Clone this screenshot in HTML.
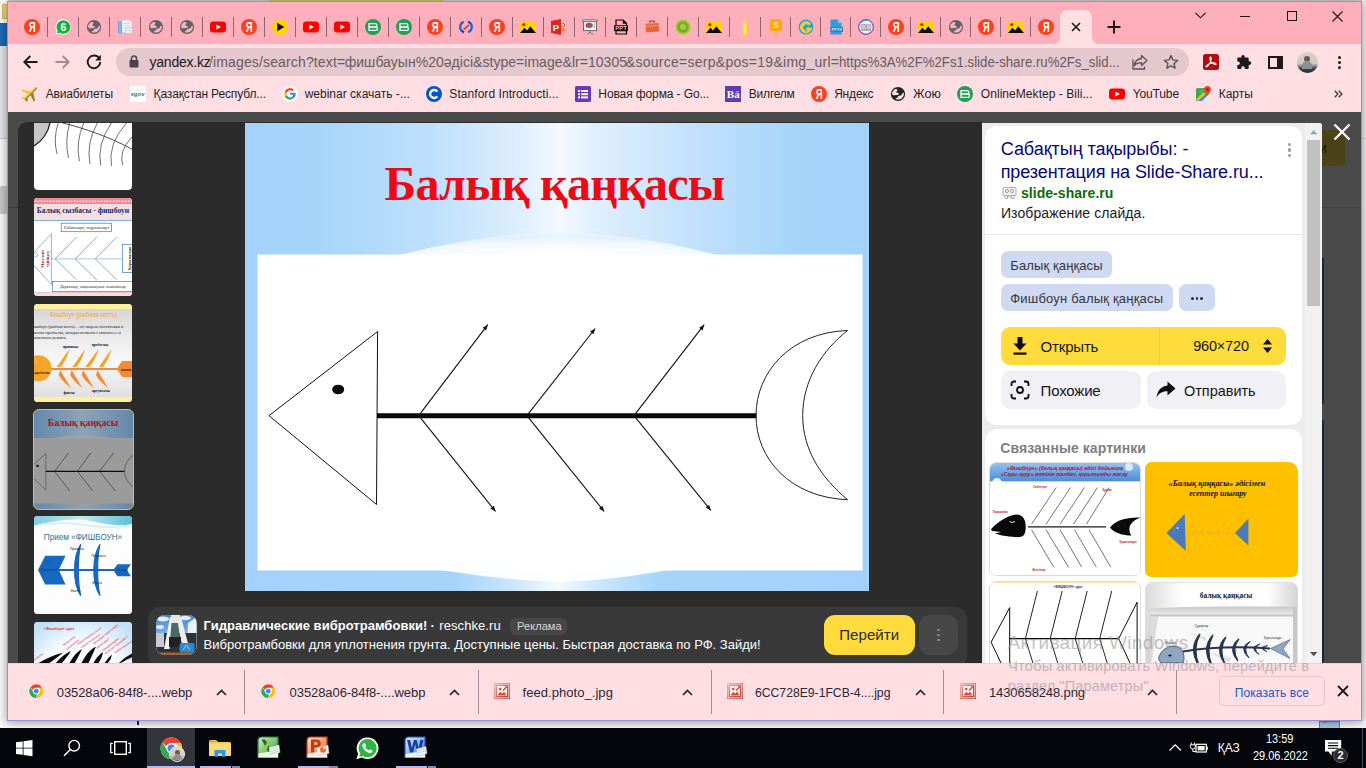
<!DOCTYPE html>
<html lang="ru"><head><meta charset="utf-8"><title>Яндекс Картинки</title><style>
html,body{margin:0;padding:0}
body{width:1366px;height:768px;overflow:hidden;position:relative;background:#f0f0f0;font-family:'Liberation Sans',sans-serif}
div,span,svg{position:absolute;box-sizing:border-box}
.t{white-space:pre;display:block}
svg{overflow:visible}
svg text{white-space:pre}
</style></head>
<body>
<!-- s_frame -->
<div style="left:0px;top:0px;width:1366px;height:728px;background:#f1f1f1;"></div>
<div style="left:0px;top:0px;width:8px;height:23px;background:#ffffff;"></div>
<div style="left:2px;top:3.5px;width:6px;height:15px;background:#ecd98e;border:1px solid #d9bc4a;border-right:none;"></div>
<div style="left:0px;top:23px;width:8px;height:23px;background:#1c6cb8;"></div>
<div style="left:0px;top:46px;width:8px;height:92px;background:#e6e8ec;"></div>
<div style="left:0px;top:138px;width:8px;height:1px;background:#c8c8c8;"></div>
<div style="left:0px;top:139px;width:8px;height:47px;background:#fafafa;"></div>
<div style="left:0px;top:185.5px;width:8px;height:28.5px;background:#c9c9c9;"></div>
<div style="left:0px;top:214px;width:8px;height:514px;background:#fbfbfb;"></div>
<div style="left:1361px;top:0px;width:5px;height:728px;background:#f4f4f4;"></div>
<div style="left:1362px;top:138px;width:4px;height:1px;background:#d0d0d0;"></div>
<div style="left:0px;top:721px;width:1366px;height:7px;background:#fafafa;"></div>
<div style="left:137px;top:721px;width:1.5px;height:4px;background:#2a1a4a;"></div>
<div style="left:1318.5px;top:721px;width:21.5px;height:7px;background:#a8cce4;border:1px solid #4a94cc;border-bottom:none;"></div>
<div style="left:1323px;top:721px;width:4px;height:2px;background:#f0f0f0;border:.5px solid #8a8a8a;"></div>
<div style="left:8px;top:0px;width:1354px;height:1px;background:#dadada;"></div>
<div style="left:269px;top:0px;width:174px;height:1px;background:#cdcd6c;"></div>
<div style="left:7px;top:1px;width:1355px;height:720px;background:#ffdee4;border:1px solid #9492dc;box-shadow:0 1px 9px 1px rgba(0,0,0,.36);"></div>
<div style="left:8px;top:2px;width:1353px;height:42px;background:#ffafbc;"></div>
<div style="left:8px;top:44px;width:1353px;height:68px;background:#ffdee4;"></div>
<div style="left:8px;top:112px;width:1353px;height:551px;background:#4a4a4a;"></div>
<div style="left:8px;top:207px;width:12px;height:1px;background:#3c3c3c;"></div>
<!-- s_tabs -->
<svg style="left:24.0px;top:19.0px;" width="16" height="16" viewBox="0 0 16 16"><circle cx="8" cy="8" r="8" fill="#fc3f1d"/><text transform="translate(8.100 13.100) scale(.66 1)" font-family="'Liberation Sans',sans-serif" font-weight="700" font-size="14.500" fill="#fff" text-anchor="middle">Я</text></svg>
<div style="left:47px;top:17px;width:1px;height:20px;background:#8a6670;"></div>
<svg style="left:55.0px;top:19.0px;" width="16" height="16" viewBox="0 0 16 16"><path d="M8.3 0.3a7.6 7.6 0 1 1-3.9 14.2L0.4 15.7l1.2-3.9A7.6 7.6 0 0 1 8.3 0.3z" fill="#fff"/><path d="M8.3 1.2a6.8 6.8 0 1 1-3.6 12.5L1.7 14.5l.9-2.9A6.8 6.8 0 0 1 8.3 1.2z" fill="#12b53c"/><text x="8.4" y="11.8" font-family="'Liberation Sans',sans-serif" font-weight="700" font-size="10.5" fill="#fff" text-anchor="middle">6</text></svg>
<div style="left:78px;top:17px;width:1px;height:20px;background:#8a6670;"></div>
<svg style="left:86.0px;top:19.0px;" width="16" height="16" viewBox="0 0 16 16"><circle cx="8" cy="8" r="7.100" fill="#5f6368"/><path d="M2.100 7.600C2.300 5.600 3.600 3.900 5.400 3.100 6.300 2.900 7.300 3.300 7.500 4 7.700 4.800 6.300 5.300 6.500 6.200 6.700 7 8.300 6.700 8.800 7.500 9.200 8.300 8 9.200 6.800 9 5.400 8.800 4.600 9.400 3.300 9.200 2.500 9.100 2 8.500 2.100 7.600z" fill="#ffafbc"/><path d="M13.900 7.400C14 9.400 13.100 11.300 11.500 12.400 10 13.400 7.600 13.900 6 13.200 5.400 12.900 5.700 12.200 6.500 12 7.600 11.700 7.600 10.700 8.500 10 9.400 9.300 10.300 9.900 11.300 9.200 12.200 8.600 11.900 7.600 12.700 7 13.200 6.600 13.800 6.800 13.900 7.400z" fill="#ffafbc"/></svg>
<div style="left:109px;top:17px;width:1px;height:20px;background:#8a6670;"></div>
<svg style="left:117.0px;top:19.0px;" width="16" height="16" viewBox="0 0 16 16"><rect x="1.200" y="2" width="4.200" height="12.300" fill="#5a9ee2"/><rect x="2.200" y="2" width="1.600" height="12.300" fill="#8cc0f0"/><path d="M5 1h7.500l2.300 2.300V13.500H5z" fill="#f3f5f8" stroke="#d2d6dc" stroke-width=".5"/><rect x="6.500" y="4" width="6.500" height=".9" fill="#d4d8de"/><rect x="6.500" y="6" width="6.500" height=".9" fill="#d4d8de"/><rect x="6.500" y="8" width="3" height=".9" fill="#d4d8de"/><rect x="8.500" y="8.800" width="7" height="6" fill="#eceff3" stroke="#b4bac2" stroke-width=".6"/><rect x="9.800" y="11" width="4.400" height="1" fill="#c8cdd4"/></svg>
<div style="left:140px;top:17px;width:1px;height:20px;background:#8a6670;"></div>
<svg style="left:148.0px;top:19.0px;" width="16" height="16" viewBox="0 0 16 16"><circle cx="8" cy="8" r="7.100" fill="#5f6368"/><path d="M2.100 7.600C2.300 5.600 3.600 3.900 5.400 3.100 6.300 2.900 7.300 3.300 7.500 4 7.700 4.800 6.300 5.300 6.500 6.200 6.700 7 8.300 6.700 8.800 7.500 9.200 8.300 8 9.200 6.800 9 5.400 8.800 4.600 9.400 3.300 9.200 2.500 9.100 2 8.500 2.100 7.600z" fill="#ffafbc"/><path d="M13.900 7.400C14 9.400 13.100 11.300 11.500 12.400 10 13.400 7.600 13.900 6 13.200 5.400 12.900 5.700 12.200 6.500 12 7.600 11.700 7.600 10.700 8.500 10 9.400 9.300 10.300 9.900 11.300 9.200 12.200 8.600 11.900 7.600 12.700 7 13.200 6.600 13.800 6.800 13.900 7.400z" fill="#ffafbc"/></svg>
<div style="left:171px;top:17px;width:1px;height:20px;background:#8a6670;"></div>
<svg style="left:179.0px;top:19.0px;" width="16" height="16" viewBox="0 0 16 16"><circle cx="8" cy="8" r="7.100" fill="#5f6368"/><path d="M2.100 7.600C2.300 5.600 3.600 3.900 5.400 3.100 6.300 2.900 7.300 3.300 7.500 4 7.700 4.800 6.300 5.300 6.500 6.200 6.700 7 8.300 6.700 8.800 7.500 9.200 8.300 8 9.200 6.800 9 5.400 8.800 4.600 9.400 3.300 9.200 2.500 9.100 2 8.500 2.100 7.600z" fill="#ffafbc"/><path d="M13.900 7.400C14 9.400 13.100 11.300 11.500 12.400 10 13.400 7.600 13.900 6 13.200 5.400 12.900 5.700 12.200 6.500 12 7.600 11.700 7.600 10.700 8.500 10 9.400 9.300 10.300 9.900 11.300 9.200 12.200 8.600 11.900 7.600 12.700 7 13.200 6.600 13.800 6.800 13.900 7.400z" fill="#ffafbc"/></svg>
<div style="left:202px;top:17px;width:1px;height:20px;background:#8a6670;"></div>
<svg style="left:210.0px;top:19.0px;" width="16" height="16" viewBox="0 0 16 16"><rect x="0" y="2.500" width="16" height="11" rx="3.200" fill="#ff0000"/><path d="M6.400 5.400v5.200l4.500-2.600z" fill="#fff"/></svg>
<div style="left:233px;top:17px;width:1px;height:20px;background:#8a6670;"></div>
<svg style="left:241.0px;top:19.0px;" width="16" height="16" viewBox="0 0 16 16"><circle cx="8" cy="8" r="8" fill="#fc3f1d"/><text transform="translate(8.100 13.100) scale(.66 1)" font-family="'Liberation Sans',sans-serif" font-weight="700" font-size="14.500" fill="#fff" text-anchor="middle">Я</text></svg>
<div style="left:264px;top:17px;width:1px;height:20px;background:#8a6670;"></div>
<svg style="left:272.0px;top:19.0px;" width="16" height="16" viewBox="0 0 16 16"><circle cx="8" cy="8" r="8" fill="#ffd500"/><path d="M5.200 3.800v8.400l7.200-4.200z" fill="#111"/></svg>
<div style="left:295px;top:17px;width:1px;height:20px;background:#8a6670;"></div>
<svg style="left:303.0px;top:19.0px;" width="16" height="16" viewBox="0 0 16 16"><rect x="0" y="2.500" width="16" height="11" rx="3.200" fill="#ff0000"/><path d="M6.400 5.400v5.200l4.500-2.600z" fill="#fff"/></svg>
<div style="left:326px;top:17px;width:1px;height:20px;background:#8a6670;"></div>
<svg style="left:334.0px;top:19.0px;" width="16" height="16" viewBox="0 0 16 16"><rect x="0" y="2.500" width="16" height="11" rx="3.200" fill="#ff0000"/><path d="M6.400 5.400v5.200l4.500-2.600z" fill="#fff"/></svg>
<div style="left:357px;top:17px;width:1px;height:20px;background:#8a6670;"></div>
<svg style="left:365.0px;top:19.0px;" width="16" height="16" viewBox="0 0 16 16"><circle cx="8" cy="8" r="8" fill="#1fa055"/><path d="M4 4.600h6.200a1.700 1.700 0 0 1 0 3.400H4zM4 8h6.800a1.700 1.700 0 0 1 0 3.400H4z" fill="none" stroke="#fff" stroke-width="1.300" stroke-linejoin="round"/></svg>
<div style="left:388px;top:17px;width:1px;height:20px;background:#8a6670;"></div>
<svg style="left:396.0px;top:19.0px;" width="16" height="16" viewBox="0 0 16 16"><circle cx="8" cy="8" r="8" fill="#1fa055"/><path d="M4 4.600h6.200a1.700 1.700 0 0 1 0 3.400H4zM4 8h6.800a1.700 1.700 0 0 1 0 3.400H4z" fill="none" stroke="#fff" stroke-width="1.300" stroke-linejoin="round"/></svg>
<div style="left:419px;top:17px;width:1px;height:20px;background:#8a6670;"></div>
<svg style="left:427.0px;top:19.0px;" width="16" height="16" viewBox="0 0 16 16"><circle cx="8" cy="8" r="8" fill="#fc3f1d"/><text transform="translate(8.100 13.100) scale(.66 1)" font-family="'Liberation Sans',sans-serif" font-weight="700" font-size="14.500" fill="#fff" text-anchor="middle">Я</text></svg>
<div style="left:450px;top:17px;width:1px;height:20px;background:#8a6670;"></div>
<svg style="left:458.0px;top:19.0px;" width="16" height="16" viewBox="0 0 16 16"><path d="M5.800 2.800A5.600 5.600 0 0 0 4.500 12.600" fill="none" stroke="#1a63d8" stroke-width="2.200"/><path d="M10.200 13.200A5.600 5.600 0 0 0 11.500 3.400" fill="none" stroke="#1a63d8" stroke-width="2.200"/><path d="M3 11.500l3.500.6-1.300 2.700z" fill="#123f9a"/><path d="M13 4.500l-3.500-.6 1.300-2.700z" fill="#123f9a"/><path d="M5.500 10.500l5.500-4.500" stroke="#d02c2c" stroke-width="1.600"/></svg>
<div style="left:481px;top:17px;width:1px;height:20px;background:#8a6670;"></div>
<svg style="left:489.0px;top:19.0px;" width="16" height="16" viewBox="0 0 16 16"><circle cx="8" cy="8" r="8" fill="#fc3f1d"/><text transform="translate(8.100 13.100) scale(.66 1)" font-family="'Liberation Sans',sans-serif" font-weight="700" font-size="14.500" fill="#fff" text-anchor="middle">Я</text></svg>
<div style="left:512px;top:17px;width:1px;height:20px;background:#8a6670;"></div>
<svg style="left:520.0px;top:19.0px;" width="16" height="16" viewBox="0 0 16 16"><rect x="0" y="2" width="16" height="12" fill="#ffd400"/><path d="M0 14l4.500-5.200 2.500 2.800 3.200-4.400L16 14z" fill="#0a0a0a"/><circle cx="3.800" cy="5.600" r="1.600" fill="#f01818"/></svg>
<div style="left:543px;top:17px;width:1px;height:20px;background:#8a6670;"></div>
<svg style="left:551.0px;top:19.0px;" width="16" height="16" viewBox="0 0 16 16"><rect x="7" y="2.500" width="8.500" height="11" fill="#fbe3dd" stroke="#e79a8c" stroke-width=".6"/><circle cx="11.800" cy="6" r="2" fill="none" stroke="#d83b2b" stroke-width="1"/><rect x="9.500" y="9.500" width="5" height="1" fill="#d83b2b"/><rect x="9.500" y="11.300" width="5" height="1" fill="#d83b2b"/><path d="M0 2l10-2v16L0 14z" fill="#e0241f"/><text x="5" y="11.600" font-family="'Liberation Sans',sans-serif" font-weight="700" font-size="9.500" fill="#fff" text-anchor="middle">P</text></svg>
<div style="left:574px;top:17px;width:1px;height:20px;background:#8a6670;"></div>
<svg style="left:582.0px;top:19.0px;" width="16" height="16" viewBox="0 0 16 16"><rect x="1.500" y="1.800" width="13" height="9.800" fill="#f3f3f3" stroke="#6a6a6a" stroke-width="1"/><rect x="0.500" y="0.800" width="15" height="1.800" rx=".6" fill="#e8e8e8" stroke="#5a5a5a" stroke-width=".8"/><ellipse cx="7.200" cy="6.300" rx="3.600" ry="2.600" fill="#d43a3a"/><path d="M4 7.200a3.600 2.200 0 0 0 6.400 0z" fill="#3a78c8"/><path d="M6 8.700a3.600 2.200 0 0 0 3-0.600l-1.600-1z" fill="#5aa844"/><rect x="11.800" y="4.500" width="1.200" height="1.200" fill="#888"/><rect x="11.800" y="7" width="1.200" height="1.200" fill="#888"/><path d="M8 11.600v2M8 13.200l-3 2.300M8 13.200l3 2.300" stroke="#7a7a7a" stroke-width="1" fill="none"/></svg>
<div style="left:605px;top:17px;width:1px;height:20px;background:#8a6670;"></div>
<svg style="left:613.0px;top:19.0px;" width="16" height="16" viewBox="0 0 16 16"><path d="M3 1h7.200L13.500 4.300V15H3z" fill="#ffafbc" stroke="#0a0a0a" stroke-width="1.200"/><path d="M9.800 1v3.700h3.700z" fill="#0a0a0a"/><rect x="1" y="6.200" width="14" height="6" rx=".8" fill="#0a0a0a"/><text x="8" y="11.400" font-family="'Liberation Sans',sans-serif" font-weight="700" font-size="6" fill="#ffafbc" text-anchor="middle">PPT</text></svg>
<div style="left:636px;top:17px;width:1px;height:20px;background:#8a6670;"></div>
<svg style="left:644.0px;top:19.0px;" width="16" height="16" viewBox="0 0 16 16"><path d="M5.800 3.800v-1.600h4.400v1.600" fill="none" stroke="#b5452c" stroke-width="1.200"/><path d="M1.500 4.800l13-.9.700 8.600-13 .9z" fill="#e8643c"/><path d="M1.600 6.600l13.200-.9.100 1.300-13.200.9z" fill="#f58a5c"/><rect x="7.200" y="7.200" width="1.800" height="1.800" fill="#f4efe8" stroke="#7a4a3a" stroke-width=".4"/></svg>
<div style="left:667px;top:17px;width:1px;height:20px;background:#8a6670;"></div>
<svg style="left:675.0px;top:19.0px;" width="16" height="16" viewBox="0 0 16 16"><circle cx="8" cy="8" r="7.600" fill="#9cc43c" stroke="#c8d850" stroke-width=".8"/><circle cx="8" cy="8" r="5.600" fill="#7da82c"/><circle cx="8" cy="8" r="3" fill="#a4c848"/></svg>
<div style="left:698px;top:17px;width:1px;height:20px;background:#8a6670;"></div>
<svg style="left:706.0px;top:19.0px;" width="16" height="16" viewBox="0 0 16 16"><rect x="0" y="2" width="16" height="12" fill="#ffd400"/><path d="M0 14l4.500-5.200 2.500 2.800 3.200-4.400L16 14z" fill="#0a0a0a"/><circle cx="3.800" cy="5.600" r="1.600" fill="#f01818"/></svg>
<div style="left:729px;top:17px;width:1px;height:20px;background:#8a6670;"></div>
<svg style="left:737.0px;top:19.0px;" width="16" height="16" viewBox="0 0 16 16"><rect x="6.300" y="0.300" width="3.400" height="2.400" fill="#ffee00"/><rect x="6.300" y="4" width="3.400" height="11.700" fill="#ffee00"/><rect x="7.400" y="4.600" width="1.200" height="10.500" fill="#fff36a"/></svg>
<div style="left:760px;top:17px;width:1px;height:20px;background:#8a6670;"></div>
<svg style="left:767.7px;top:19.0px;" width="16" height="16" viewBox="0 0 16 16"><rect x="2" y="0.300" width="12" height="11.700" rx="2.200" fill="#ffa800"/><path d="M5.500 15.600l2.500-2.200 2.500 2.200z" fill="#ffa800"/><text x="8" y="9.400" font-family="'Liberation Sans',sans-serif" font-weight="700" font-size="9" fill="#ffe7b0" text-anchor="middle">S</text></svg>
<div style="left:790px;top:17px;width:1px;height:20px;background:#8a6670;"></div>
<svg style="left:797.7px;top:19.0px;" width="16" height="16" viewBox="0 0 16 16"><circle cx="8" cy="8" r="7.400" fill="#22a6c8"/><path d="M12.600 4.800A5.700 5.700 0 1 0 13.700 9H8.600v1.800h2.700A3.600 3.600 0 1 1 11 6z" fill="#f8c840" stroke="#f8c840" stroke-width=".9" stroke-linejoin="round"/></svg>
<div style="left:820px;top:17px;width:1px;height:20px;background:#8a6670;"></div>
<svg style="left:828.0px;top:19.0px;" width="16" height="16" viewBox="0 0 16 16"><path d="M2.500 0.500h7.500l3.500 3.500V15.500h-11z" fill="#2d9be0"/><path d="M10 0.500v3.500h3.500z" fill="#8acbf2"/><rect x="2.500" y="8" width="12.500" height="5" fill="#1f84c8"/><text x="8.800" y="12" font-family="'Liberation Sans',sans-serif" font-weight="700" font-size="4" fill="#cfe9fa" text-anchor="middle">PPTX</text></svg>
<div style="left:850px;top:17px;width:1px;height:20px;background:#8a6670;"></div>
<svg style="left:858.0px;top:19.0px;" width="16" height="16" viewBox="0 0 16 16"><circle cx="8" cy="8" r="7.400" fill="#eef0f4" stroke="#7a3fa8" stroke-width="1.100"/><path d="M3 3.500A7.400 7.400 0 0 1 14.800 5" fill="none" stroke="#4aa6e8" stroke-width="1.100"/><path d="M3.200 5.500h4.400l.4.500.4-.5h4.400v5H3.200z" fill="#c9c9cf" stroke="#8c8c94" stroke-width=".5"/><path d="M8 6v4.500" stroke="#c050a0" stroke-width=".7"/><rect x="3" y="10.800" width="10" height=".9" fill="#8c8c94"/></svg>
<div style="left:880px;top:17px;width:1px;height:20px;background:#8a6670;"></div>
<svg style="left:888.0px;top:19.0px;" width="16" height="16" viewBox="0 0 16 16"><circle cx="8" cy="8" r="8" fill="#fc3f1d"/><text transform="translate(8.100 13.100) scale(.66 1)" font-family="'Liberation Sans',sans-serif" font-weight="700" font-size="14.500" fill="#fff" text-anchor="middle">Я</text></svg>
<div style="left:910px;top:17px;width:1px;height:20px;background:#8a6670;"></div>
<svg style="left:918.0px;top:19.0px;" width="16" height="16" viewBox="0 0 16 16"><rect x="0" y="2" width="16" height="12" fill="#ffd400"/><path d="M0 14l4.500-5.200 2.500 2.800 3.200-4.400L16 14z" fill="#0a0a0a"/><circle cx="3.800" cy="5.600" r="1.600" fill="#f01818"/></svg>
<div style="left:940px;top:17px;width:1px;height:20px;background:#8a6670;"></div>
<svg style="left:948.0px;top:19.0px;" width="16" height="16" viewBox="0 0 16 16"><circle cx="8" cy="8" r="7.100" fill="#5f6368"/><path d="M2.100 7.600C2.300 5.600 3.600 3.900 5.400 3.100 6.300 2.900 7.300 3.300 7.500 4 7.700 4.800 6.300 5.300 6.500 6.200 6.700 7 8.300 6.700 8.800 7.500 9.200 8.300 8 9.200 6.800 9 5.400 8.800 4.600 9.400 3.300 9.200 2.500 9.100 2 8.500 2.100 7.600z" fill="#ffafbc"/><path d="M13.900 7.400C14 9.400 13.100 11.300 11.500 12.400 10 13.400 7.600 13.900 6 13.200 5.400 12.900 5.700 12.200 6.500 12 7.600 11.700 7.600 10.700 8.500 10 9.400 9.300 10.300 9.900 11.300 9.200 12.200 8.600 11.900 7.600 12.700 7 13.200 6.600 13.800 6.800 13.900 7.400z" fill="#ffafbc"/></svg>
<div style="left:970px;top:17px;width:1px;height:20px;background:#8a6670;"></div>
<svg style="left:978.0px;top:19.0px;" width="16" height="16" viewBox="0 0 16 16"><circle cx="8" cy="8" r="8" fill="#fc3f1d"/><text transform="translate(8.100 13.100) scale(.66 1)" font-family="'Liberation Sans',sans-serif" font-weight="700" font-size="14.500" fill="#fff" text-anchor="middle">Я</text></svg>
<div style="left:1000px;top:17px;width:1px;height:20px;background:#8a6670;"></div>
<svg style="left:1008.0px;top:19.0px;" width="16" height="16" viewBox="0 0 16 16"><rect x="0" y="2" width="16" height="12" fill="#ffd400"/><path d="M0 14l4.500-5.200 2.500 2.800 3.200-4.400L16 14z" fill="#0a0a0a"/><circle cx="3.800" cy="5.600" r="1.600" fill="#f01818"/></svg>
<div style="left:1030px;top:17px;width:1px;height:20px;background:#8a6670;"></div>
<svg style="left:1038.0px;top:19.0px;" width="16" height="16" viewBox="0 0 16 16"><circle cx="8" cy="8" r="8" fill="#fc3f1d"/><text transform="translate(8.100 13.100) scale(.66 1)" font-family="'Liberation Sans',sans-serif" font-weight="700" font-size="14.500" fill="#fff" text-anchor="middle">Я</text></svg>
<svg style="left:1052px;top:10px;" width="48" height="34" viewBox="0 0 48 34"><path d="M0 34C5.500 34 8 31.500 8 26V8c0-5 3-8 8-8h16c5 0 8 3 8 8v18c0 5.500 2.500 8 8 8z" fill="#ffdee4"/></svg>
<svg style="left:1071px;top:22px;" width="10" height="10" viewBox="0 0 10 10"><path d="M1 1l8 8M9 1l-8 8" stroke="#1f1f1f" stroke-width="1.700" fill="none"/></svg>
<svg style="left:1107px;top:20px;" width="14" height="14" viewBox="0 0 14 14"><path d="M7 0.500v13M0.500 7h13" stroke="#1a1a1a" stroke-width="2" fill="none"/></svg>
<svg style="left:1195px;top:12px;" width="11" height="7" viewBox="0 0 11 7"><path d="M0.500 0.800l5 5 5-5" stroke="#1a1a1a" stroke-width="1.100" fill="none"/></svg>
<div style="left:1240px;top:16px;width:10px;height:1px;background:#1a1a1a;"></div>
<div style="left:1287px;top:11px;width:10px;height:10px;border:1px solid #1a1a1a;"></div>
<svg style="left:1332px;top:11px;" width="11" height="11" viewBox="0 0 11 11"><path d="M0.500 0.500l10 10M10.500 0.500l-10 10" stroke="#1a1a1a" stroke-width="1.100" fill="none"/></svg>
<!-- s_toolbar -->
<svg style="left:22.5px;top:55px;" width="15" height="14" viewBox="0 0 15 14"><path d="M14.500 7H1.800M7.300 1L1.300 7l6 6" stroke="#1b1b1b" stroke-width="1.900" fill="none"/></svg>
<svg style="left:54.5px;top:55px;" width="15" height="14" viewBox="0 0 15 14"><path d="M0.500 7h12.700M7.700 1l6 6-6 6" stroke="#a08c92" stroke-width="1.900" fill="none"/></svg>
<svg style="left:86px;top:54px;" width="16" height="16" viewBox="0 0 16 16"><path d="M13.200 4.300A6.300 6.300 0 1 0 14.300 8" stroke="#1b1b1b" stroke-width="1.900" fill="none"/><path d="M14.800 0.800v5.600H9.200z" fill="#1b1b1b"/></svg>
<div style="left:116px;top:48px;width:1073px;height:28px;background:#e4c8ce;border-radius:14px;"></div>
<svg style="left:129px;top:55px;" width="10" height="13" viewBox="0 0 10 13"><rect x="0.500" y="5" width="9" height="7.500" rx="1" fill="#4a4448"/><path d="M2.500 5.500V3.500a2.500 2.500 0 0 1 5 0v2" stroke="#4a4448" stroke-width="1.500" fill="none"/></svg>
<span class="t" style="left:149.53px;top:54.85px;font:400 14px 'Liberation Sans',sans-serif;line-height:14px;color:#20171a;letter-spacing:-0.223px;">yandex.kz</span>
<span class="t" style="left:209.03px;top:54.85px;font:400 14px 'Liberation Sans',sans-serif;line-height:14px;color:#6b5a5f;letter-spacing:0.139px;">/images/search?text=</span>
<span class="t" style="left:344.73px;top:54.85px;font:400 14px 'Liberation Sans',sans-serif;line-height:14px;color:#6b5a5f;letter-spacing:0.030px;">фишбауын%20әдісі&amp;stype=image&amp;lr=10305</span>
<span class="t" style="left:625.83px;top:54.85px;font:400 14px 'Liberation Sans',sans-serif;line-height:14px;color:#6b5a5f;letter-spacing:0.271px;">&amp;source=serp&amp;pos=19&amp;img_url=</span>
<span class="t" style="left:838.63px;top:54.85px;font:400 14px 'Liberation Sans',sans-serif;line-height:14px;color:#6b5a5f;transform:scaleX(0.9442);transform-origin:0 0;">https%3A%2F%2Fs1.slide-share.ru%2Fs_slid...</span>
<svg style="left:1131.5px;top:54px;" width="16" height="16" viewBox="0 0 16 16"><path d="M9.500 1.500l5.500 5-5.500 5V8.700C5.500 8.700 3.500 10 2.200 12 2.700 8 5 5 9.500 4.500z" fill="none" stroke="#5c5055" stroke-width="1.300" stroke-linejoin="round"/><path d="M1 5.500v9.500h11.500v-2.500" fill="none" stroke="#5c5055" stroke-width="1.300"/></svg>
<svg style="left:1163px;top:54px;" width="16" height="16" viewBox="0 0 16 16"><path d="M8 1.600l1.950 4.300 4.650.5-3.500 3.150 1 4.600L8 11.800l-4.100 2.350 1-4.600L1.400 6.400l4.650-.5z" fill="none" stroke="#5c5055" stroke-width="1.400" stroke-linejoin="round"/></svg>
<svg style="left:1203px;top:54px;" width="16" height="16" viewBox="0 0 16 16"><rect width="16" height="16" rx="2.500" fill="#b30b0f"/><path d="M3 12.300c1.500-2.300 3.800-3 6.500-3.300 1.800-.2 3.500.1 3.600 1 .1.900-1.800.7-3.400-.600C7.600 7.800 6.800 5.600 7 3.800c.1-.9 1.100-1 1.200 0 .2 2.300-1.400 6-3.300 8.200-.8.900-2.300 1.200-1.900.3z" fill="none" stroke="#fff" stroke-width="1.100" stroke-linejoin="round"/></svg>
<svg style="left:1235px;top:54px;" width="16" height="16" viewBox="0 0 16 16"><path d="M6.300 2.600a1.700 1.700 0 0 1 3.400 0V3.500h3a1 1 0 0 1 1 1v2.800h.8a1.800 1.800 0 0 1 0 3.600h-.8v3a1 1 0 0 1-1 1h-2.900v-.8a1.800 1.800 0 0 0-3.600 0v.8H3.300a1 1 0 0 1-1-1V11h.8a1.800 1.800 0 0 0 0-3.600h-.8V4.500a1 1 0 0 1 1-1h3z" fill="#1b1b1b"/></svg>
<div style="left:1267.5px;top:55.5px;width:15px;height:13.5px;border:2px solid #1b1b1b;border-right-width:6px;"></div>
<div style="left:1296.5px;top:51.5px;width:21px;height:21px;background:#cfc8c0;border-radius:11px;overflow:hidden;"><div style="left:0px;top:0px;width:21px;height:21px;background:linear-gradient(180deg,#d9d4cb 0%,#cfc9c0 55%,#3a3e4c 80%,#2a2e3c 100%);"></div><div style="left:7.5px;top:4px;width:6px;height:6px;background:#6b5a50;border-radius:3px;"></div><div style="left:5.5px;top:9px;width:10px;height:8px;background:#8c8e98;border-radius:5px 5px 0 0;"></div></div>
<div style="left:1338px;top:55.7px;width:3px;height:3px;background:#1b1b1b;border-radius:2px;"></div>
<div style="left:1338px;top:60.7px;width:3px;height:3px;background:#1b1b1b;border-radius:2px;"></div>
<div style="left:1338px;top:65.7px;width:3px;height:3px;background:#1b1b1b;border-radius:2px;"></div>
<svg style="left:22px;top:86px;" width="16" height="16" viewBox="0 0 16 16"><g transform="rotate(45 8 8)"><path d="M8 -1.500c.9 0 1.300 1 1.300 2.200v4l7 4.300v1.800l-7-2.200v4.200l2 1.500v1.400L8 15.800l-3.300.9v-1.400l2-1.500V9.600l-7 2.200V10l7-4.300v-4C6.700.5 7.100-1.500 8-1.500z" fill="#f7c81e"/><path d="M8 -1.500c.9 0 1.300 1 1.300 2.200v4l7 4.300v1.800l-7-2.200v4.200l2 1.500v1.400L8 15.800z" fill="#4a4a4a" opacity=".55"/></g></svg>
<span class="t" style="left:45.64px;top:87.64px;font:400 12px 'Liberation Sans',sans-serif;line-height:12px;color:#1f1f1f;letter-spacing:-0.141px;">Авиабилеты</span>
<div style="left:130px;top:86px;width:16px;height:16px;background:#ffffff;"></div>
<span class="t" style="left:131.00px;top:91.77px;font:700 5px 'Liberation Sans',sans-serif;line-height:5px;color:#2a6a9a;">e</span>
<span class="t" style="left:133.80px;top:91.42px;font:700 6px 'Liberation Sans',sans-serif;line-height:6px;color:#1f8a3a;">gov</span>
<span class="t" style="left:153.54px;top:87.64px;font:400 12px 'Liberation Sans',sans-serif;line-height:12px;color:#1f1f1f;letter-spacing:-0.138px;">Қазақстан Республ...</span>
<svg style="left:281.5px;top:86px;" width="16" height="16" viewBox="0 0 16 16"><circle cx="8" cy="8" r="8" fill="#fff"/><path d="M8 6.700h5.600a5.800 5.800 0 0 1-1.900 5.600l-1.800-1.400a3.500 3.500 0 0 0 1.300-2.100H8z" fill="#4285f4"/><path d="M11.700 12.300A5.800 5.800 0 0 1 2.800 10.600l1.900-1.500a3.500 3.500 0 0 0 5.200 1.800z" fill="#34a853"/><path d="M2.800 10.600a5.800 5.800 0 0 1 0-5.200l1.900 1.500a3.500 3.500 0 0 0 0 2.200z" fill="#fbbc05"/><path d="M2.800 5.400A5.800 5.800 0 0 1 12 3.600l-1.600 1.600a3.500 3.500 0 0 0-5.700 1.700z" fill="#ea4335"/></svg>
<span class="t" style="left:304.64px;top:87.64px;font:400 12px 'Liberation Sans',sans-serif;line-height:12px;color:#1f1f1f;letter-spacing:0.014px;">webinar скачать -...</span>
<svg style="left:425.8px;top:86px;" width="16" height="16" viewBox="0 0 16 16"><circle cx="8" cy="8" r="8" fill="#0056d2"/><path d="M11.300 5.600A4 4 0 1 0 11.300 10.400" fill="none" stroke="#fff" stroke-width="2.300"/></svg>
<span class="t" style="left:449.34px;top:87.64px;font:400 12px 'Liberation Sans',sans-serif;line-height:12px;color:#1f1f1f;letter-spacing:0.057px;">Stanford Introducti...</span>
<svg style="left:574.5px;top:86px;" width="16" height="16" viewBox="0 0 16 16"><rect width="16" height="16" rx="1.500" fill="#673ab7"/><g fill="#fff"><rect x="3" y="4" width="2" height="2"/><rect x="6" y="4" width="7" height="2"/><rect x="3" y="7.200" width="2" height="2"/><rect x="6" y="7.200" width="7" height="2"/><rect x="3" y="10.400" width="2" height="2"/><rect x="6" y="10.400" width="7" height="2"/></g></svg>
<span class="t" style="left:598.34px;top:87.64px;font:400 12px 'Liberation Sans',sans-serif;line-height:12px;color:#1f1f1f;letter-spacing:-0.110px;">Новая форма - Go...</span>
<div style="left:724.8px;top:86px;width:16px;height:16px;background:#5b3fb0;"></div>
<span class="t" style="left:726.80px;top:88.79px;font:700 11px 'Liberation Serif',serif;line-height:11px;color:#fff;">Bá</span>
<span class="t" style="left:748.84px;top:87.64px;font:400 12px 'Liberation Sans',sans-serif;line-height:12px;color:#1f1f1f;letter-spacing:-0.220px;">Вилгелм</span>
<svg style="left:810.5px;top:86px;" width="16" height="16" viewBox="0 0 16 16"><circle cx="8" cy="8" r="8" fill="#fc3f1d"/><text transform="translate(8.100 13.100) scale(.66 1)" font-family="'Liberation Sans',sans-serif" font-weight="700" font-size="14.500" fill="#fff" text-anchor="middle">Я</text></svg>
<span class="t" style="left:834.14px;top:87.64px;font:400 12px 'Liberation Sans',sans-serif;line-height:12px;color:#1f1f1f;letter-spacing:-0.173px;">Яндекс</span>
<svg style="left:890px;top:86px;" width="16" height="16" viewBox="0 0 16 16"><circle cx="8" cy="8" r="7.100" fill="#202124"/><path d="M2.100 7.600C2.300 5.600 3.600 3.900 5.400 3.100 6.300 2.900 7.300 3.300 7.500 4 7.700 4.800 6.300 5.300 6.500 6.200 6.700 7 8.300 6.700 8.800 7.500 9.200 8.300 8 9.200 6.800 9 5.400 8.800 4.600 9.400 3.300 9.200 2.500 9.100 2 8.500 2.100 7.600z" fill="#ffdee4"/><path d="M13.900 7.400C14 9.400 13.100 11.300 11.500 12.400 10 13.400 7.600 13.900 6 13.200 5.400 12.900 5.700 12.200 6.500 12 7.600 11.700 7.600 10.700 8.500 10 9.400 9.300 10.300 9.900 11.300 9.200 12.200 8.600 11.900 7.600 12.700 7 13.200 6.600 13.800 6.800 13.900 7.400z" fill="#ffdee4"/></svg>
<span class="t" style="left:912.84px;top:87.64px;font:400 12px 'Liberation Sans',sans-serif;line-height:12px;color:#1f1f1f;transform:scaleX(1.0449);transform-origin:0 0;">Жою</span>
<svg style="left:957px;top:86px;" width="16" height="16" viewBox="0 0 16 16"><circle cx="8" cy="8" r="8" fill="#1fa055"/><path d="M4 4.600h6.200a1.700 1.700 0 0 1 0 3.400H4zM4 8h6.800a1.700 1.700 0 0 1 0 3.400H4z" fill="none" stroke="#fff" stroke-width="1.300" stroke-linejoin="round"/></svg>
<span class="t" style="left:980.84px;top:87.64px;font:400 12px 'Liberation Sans',sans-serif;line-height:12px;color:#1f1f1f;letter-spacing:0.050px;">OnlineMektep - Bili...</span>
<svg style="left:1108.8px;top:86px;" width="16" height="16" viewBox="0 0 16 16"><rect x="0" y="2.500" width="16" height="11" rx="3.200" fill="#ff0000"/><path d="M6.400 5.400v5.200l4.500-2.600z" fill="#fff"/></svg>
<span class="t" style="left:1132.64px;top:87.64px;font:400 12px 'Liberation Sans',sans-serif;line-height:12px;color:#1f1f1f;letter-spacing:-0.119px;">YouTube</span>
<svg style="left:1196px;top:86px;" width="16" height="16" viewBox="0 0 16 16"><rect x="0" y="2" width="13" height="13" rx="1.500" fill="#34a853"/><path d="M0 15l8-8 5 8z" fill="#4285f4"/><path d="M0 13.500L9 4.500l2 2L2 15H1.500z" fill="#fbbc05"/><path d="M3 2h6v5H3z" fill="#4caf50"/><path d="M6 15l7-7v7z" fill="#e8eaed"/><path d="M11.500 0a3.500 3.500 0 0 1 3.500 3.500c0 2.500-3.500 6-3.500 6S8 6 8 3.500A3.500 3.500 0 0 1 11.500 0z" fill="#ea4335"/><circle cx="11.500" cy="3.500" r="1.200" fill="#8c1c13"/></svg>
<span class="t" style="left:1218.64px;top:87.64px;font:400 12px 'Liberation Sans',sans-serif;line-height:12px;color:#1f1f1f;letter-spacing:0.023px;">Карты</span>
<svg style="left:1333.5px;top:90px;" width="9" height="8" viewBox="0 0 9 8"><path d="M0.800 0.800l3 3.200-3 3.200M4.800 0.800l3 3.200-3 3.200" stroke="#4a4448" stroke-width="1.500" fill="none"/></svg>
<!-- s_viewer -->
<div style="left:1322px;top:130px;width:23px;height:36px;background:#4b4217;border-radius:0 3px 3px 0;"></div>
<span class="t" style="left:1319.00px;top:140.85px;font:400 14px 'Liberation Sans',sans-serif;line-height:14px;color:#141006;">и</span>
<div style="left:1322px;top:207px;width:39px;height:1px;background:#434343;"></div>
<div style="left:1322px;top:258px;width:1.5px;height:146px;background:#1c2638;"></div>
<div style="left:1322px;top:420px;width:1.5px;height:243px;background:#1c2638;"></div>
<div style="left:18px;top:122px;width:964px;height:541px;background:#2b2b2b;border-radius:9px 0 0 0;"></div>
<svg style="left:1333px;top:122.5px;" width="18" height="18" viewBox="0 0 18 18"><path d="M1.500 1.500l15 15M16.500 1.500l-15 15" stroke="#fff" stroke-width="2.400" fill="none"/></svg>
<!-- s_slide -->
<svg style="left:245px;top:122.5px;" width="624" height="468" viewBox="0 0 624 468"><defs><linearGradient id="sbg" x1="0" x2="1" y1="0" y2="0"><stop offset="0" stop-color="#a2d2fb"/><stop offset=".12" stop-color="#a6d5fb"/><stop offset=".3" stop-color="#bfe0fc"/><stop offset=".44" stop-color="#deeefd"/><stop offset=".505" stop-color="#f3f9fe"/><stop offset=".56" stop-color="#e0effd"/><stop offset=".72" stop-color="#c2e1fc"/><stop offset=".88" stop-color="#a6d5fb"/><stop offset="1" stop-color="#a2d2fb"/></linearGradient><linearGradient id="sbg2" x1="0" x2="1" y1="0" y2="0"><stop offset="0" stop-color="#a2d2fb"/><stop offset=".34" stop-color="#a6d5fb"/><stop offset=".44" stop-color="#cfe8fc"/><stop offset=".5" stop-color="#f4fafe"/><stop offset=".56" stop-color="#cfe8fc"/><stop offset=".66" stop-color="#a6d5fb"/><stop offset="1" stop-color="#a2d2fb"/></linearGradient><radialGradient id="hill" cx=".5" cy="1" r=".75"><stop offset="0" stop-color="#ffffff"/><stop offset=".7" stop-color="#f4faff" stop-opacity=".95"/><stop offset="1" stop-color="#e6f3fe" stop-opacity=".75"/></radialGradient></defs><rect x="0" y="0" width="624" height="468" fill="url(#sbg)"/><rect x="0" y="446" width="624" height="22" fill="url(#sbg2)"/><path d="M150 133C210 118 260 110 312 109.500C372 110 420 118 475 133z" fill="url(#hill)"/><rect x="12.500" y="131.500" width="605" height="316" fill="#ffffff"/><path d="M196 447C240 454 280 458.500 312 458.500C350 458.500 390 453 424 447z" fill="#ffffff" opacity=".92"/><path d="M24.0 292.7L132.6 208.5L131.5 381.5z" fill="none" stroke="#111" stroke-width="1"/><ellipse cx="93.2" cy="266.5" rx="6" ry="4.800" fill="#0a0a0a"/><path d="M132.0 292.7L511.5 292.7" stroke="#0a0a0a" stroke-width="5"/><path d="M173.7 292.7L242.8 201.7" stroke="#111" stroke-width="1.100"/><path d="M242.8 201.7L237.7 204.7L241.2 207.4z" fill="#111"/><path d="M173.7 292.7L250.6 388.5" stroke="#111" stroke-width="1.100"/><path d="M250.6 388.5L248.9 382.8L245.4 385.6z" fill="#111"/><path d="M281.9 292.7L350.2 205.5" stroke="#111" stroke-width="1.100"/><path d="M350.2 205.5L345.1 208.5L348.5 211.2z" fill="#111"/><path d="M281.9 292.7L359.2 388.5" stroke="#111" stroke-width="1.100"/><path d="M359.2 388.5L357.5 382.8L354.0 385.6z" fill="#111"/><path d="M389.0 292.7L459.2 201.7" stroke="#111" stroke-width="1.100"/><path d="M459.2 201.7L454.1 204.7L457.6 207.4z" fill="#111"/><path d="M389.0 292.7L465.9 387.5" stroke="#111" stroke-width="1.100"/><path d="M465.9 387.5L464.1 381.8L460.7 384.6z" fill="#111"/><path d="M602.6 207.5C545.0 209.5 511.0 249.5 511.0 292.5C511.0 335.5 545.0 374.5 602.6 376.7C577.0 355.5 557.7 327.5 557.7 292.5C557.7 257.5 577.0 227.5 602.6 207.5z" fill="none" stroke="#222" stroke-width="1"/></svg>
<span class="t" style="left:384.50px;top:160.30px;font:700 48px 'Liberation Serif',serif;line-height:48px;color:#ee0a14;letter-spacing:-0.767px;">Балық қаңқасы</span>
<!-- s_thumbs -->
<div style="left:34px;top:122.5px;width:98px;height:67.5px;background:#ffffff;border-radius:0 0 4px 4px;overflow:hidden;"><svg style="left:0px;top:0px;" width="98" height="67.5" viewBox="0 0 98 67.5"><path d="M0 0h16C14 10 8 18 0 23z" fill="#c6c6c6"/><path d="M16 0C14 10 8 18 0 23" fill="none" stroke="#111" stroke-width="1.200"/><path d="M28.500 0C50 5 78 15 98 26.200" fill="none" stroke="#222" stroke-width=".8"/><path d="M24.2 0Q19 15.45 23 30.9" fill="none" stroke="#333" stroke-width=".7"/><path d="M35.7 0Q30.5 17.45 34.5 34.9" fill="none" stroke="#333" stroke-width=".7"/><path d="M49.7 0Q41.4 19.1 45.4 38.2" fill="none" stroke="#333" stroke-width=".7"/><path d="M63.3 0Q52 20.5 56 41" fill="none" stroke="#333" stroke-width=".7"/><path d="M77.4 0Q62.7 21.2 66.7 42.4" fill="none" stroke="#333" stroke-width=".7"/><path d="M92.5 0Q73.5 21.45 77.5 42.9" fill="none" stroke="#333" stroke-width=".7"/><path d="M98 14Q84.6 27.95 88.6 41.9" fill="none" stroke="#333" stroke-width=".7"/></svg></div>
<div style="left:34px;top:198px;width:98px;height:98px;background:#fff;border-radius:4px;overflow:hidden;"><svg style="left:0px;top:0px;" width="98" height="98" viewBox="0 0 98 98"><rect width="98" height="98" fill="#fff"/><rect width="98" height="22.500" fill="#f5e0e0"/><rect width="98" height="6" fill="#f08a9a"/><circle cx="1.5" cy="3.200" r="1" fill="#fbd0d6"/><circle cx="4.5" cy="3.200" r="1" fill="#fbd0d6"/><circle cx="7.5" cy="3.200" r="1" fill="#fbd0d6"/><circle cx="10.5" cy="3.200" r="1" fill="#fbd0d6"/><circle cx="13.5" cy="3.200" r="1" fill="#fbd0d6"/><circle cx="16.5" cy="3.200" r="1" fill="#fbd0d6"/><circle cx="19.5" cy="3.200" r="1" fill="#fbd0d6"/><circle cx="22.5" cy="3.200" r="1" fill="#fbd0d6"/><circle cx="25.5" cy="3.200" r="1" fill="#fbd0d6"/><circle cx="28.5" cy="3.200" r="1" fill="#fbd0d6"/><circle cx="31.5" cy="3.200" r="1" fill="#fbd0d6"/><circle cx="34.5" cy="3.200" r="1" fill="#fbd0d6"/><circle cx="37.5" cy="3.200" r="1" fill="#fbd0d6"/><circle cx="40.5" cy="3.200" r="1" fill="#fbd0d6"/><circle cx="43.5" cy="3.200" r="1" fill="#fbd0d6"/><circle cx="46.5" cy="3.200" r="1" fill="#fbd0d6"/><circle cx="49.5" cy="3.200" r="1" fill="#fbd0d6"/><circle cx="52.5" cy="3.200" r="1" fill="#fbd0d6"/><circle cx="55.5" cy="3.200" r="1" fill="#fbd0d6"/><circle cx="58.5" cy="3.200" r="1" fill="#fbd0d6"/><circle cx="61.5" cy="3.200" r="1" fill="#fbd0d6"/><circle cx="64.5" cy="3.200" r="1" fill="#fbd0d6"/><circle cx="67.5" cy="3.200" r="1" fill="#fbd0d6"/><circle cx="70.5" cy="3.200" r="1" fill="#fbd0d6"/><circle cx="73.5" cy="3.200" r="1" fill="#fbd0d6"/><circle cx="76.5" cy="3.200" r="1" fill="#fbd0d6"/><circle cx="79.5" cy="3.200" r="1" fill="#fbd0d6"/><circle cx="82.5" cy="3.200" r="1" fill="#fbd0d6"/><circle cx="85.5" cy="3.200" r="1" fill="#fbd0d6"/><circle cx="88.5" cy="3.200" r="1" fill="#fbd0d6"/><circle cx="91.5" cy="3.200" r="1" fill="#fbd0d6"/><circle cx="94.5" cy="3.200" r="1" fill="#fbd0d6"/><circle cx="97.5" cy="3.200" r="1" fill="#fbd0d6"/><text x="49" y="14.8" font-family="'Liberation Serif',serif" font-size="7.6" font-weight="700" fill="#1c2a6a" text-anchor="middle">Балық сызбасы - фишбоун</text><rect y="22.200" width="98" height=".8" fill="#6aa0d8"/><rect x="27.200" y="25.200" width="50.300" height="8.500" fill="#fff" stroke="#3a7cc0" stroke-width=".7"/><text x="52.3" y="31.4" font-family="'Liberation Serif',serif" font-size="4.6" font-weight="400" font-style="italic" fill="#222" text-anchor="middle">Себептері, түрткілері</text><path d="M17.400 35.500L-6 61 17.400 86.400z" fill="#fff" stroke="#5b9bd5" stroke-width=".7"/><circle cx="1.500" cy="57" r="2.200" fill="none" stroke="#5b9bd5" stroke-width=".6"/><path d="M17.400 60.900H88.500" stroke="#a8c8e8" stroke-width="1"/><path d="M42.7 39L21.2 60.900L42.7 82" fill="none" stroke="#4a8cd0" stroke-width=".7"/><path d="M62.8 39L41.3 60.900L62.8 82" fill="none" stroke="#4a8cd0" stroke-width=".7"/><path d="M82.8 39L61.3 60.900L82.8 82" fill="none" stroke="#4a8cd0" stroke-width=".7"/><rect x="88.300" y="46.600" width="12" height="28" fill="#fff" stroke="#3a7cc0" stroke-width=".7"/><rect x="18.600" y="83.500" width="82" height="10" fill="#fff" stroke="#3a7cc0" stroke-width=".7"/><text x="59" y="90.4" font-family="'Liberation Serif',serif" font-size="4.3" font-weight="400" font-style="italic" fill="#222" text-anchor="middle">Деректер, нақтылаушы жағдайлар</text><text x="0" y="0" font-family="'Liberation Serif',serif" font-size="4.2" font-weight="700" fill="#7a1a2a" text-anchor="middle" transform="translate(9.500 61) rotate(-90)">Мәселені</text><text x="0" y="0" font-family="'Liberation Serif',serif" font-size="4.2" font-weight="700" fill="#7a1a2a" text-anchor="middle" transform="translate(14.500 61) rotate(-90)">түйіндеу</text><text x="0" y="0" font-family="'Liberation Serif',serif" font-size="4" font-weight="700" fill="#222" text-anchor="middle" transform="translate(96.500 60.500) rotate(-90)">Қорытынды</text><rect y="94" width="98" height="4" fill="#f3dcdc"/><rect y="94" width="98" height=".6" fill="#e0b8b8"/></svg></div>
<div style="left:34px;top:304px;width:98px;height:98px;background:#eee;border-radius:4px;overflow:hidden;"><svg style="left:0px;top:0px;" width="98" height="98" viewBox="0 0 98 98"><defs><linearGradient id="g3" x1="0" x2="0" y1="0" y2="1"><stop offset="0" stop-color="#d2d2d2"/><stop offset=".35" stop-color="#ececec"/><stop offset=".6" stop-color="#f8f8f8"/><stop offset="1" stop-color="#dcdcdc"/></linearGradient></defs><rect width="98" height="98" fill="url(#g3)"/><rect width="98" height="5" fill="#fdf29a"/><rect y="93" width="98" height="5" fill="#fdf29a"/><text x="49.2" y="13.2" font-family="'Liberation Sans',sans-serif" font-size="6.5" font-weight="400" fill="#f5a04a" text-anchor="middle" textLength="67.300" lengthAdjust="spacingAndGlyphs">Фишбоун (рыбная кость)</text><text x="-4" y="24.2" font-family="'Liberation Serif',serif" font-size="4.2" font-weight="400" fill="#222" text-anchor="start">Фишбоун (рыбная кость) – это модель постановки и</text><text x="-5" y="29.6" font-family="'Liberation Serif',serif" font-size="4.2" font-weight="400" fill="#222" text-anchor="start">решения проблемы, которая позволяет описать ее и</text><text x="-3" y="35" font-family="'Liberation Serif',serif" font-size="4.2" font-weight="400" fill="#222" text-anchor="start">попытаться решить.</text><circle cx="4.500" cy="64.200" r="13" fill="#f7a428"/><circle cx="1.500" cy="57.500" r="1.800" fill="none" stroke="#fbd08a" stroke-width=".5"/><path d="M17 65H85" stroke="#f08a3c" stroke-width="2"/><path d="M82.800 65L88 57h11v16H88z" fill="#f58a32"/><path d="M22.7 63L35.5 44.900Q32.6 56 26.7 63z" fill="#f7a02a"/><path d="M38.4 63L51 44.900Q48.2 56 42.4 63z" fill="#f7a02a"/><path d="M51.3 63L64.6 44.900Q61.449999999999996 56 55.3 63z" fill="#f7a02a"/><path d="M64.9 63L77.5 44.900Q74.7 56 68.9 63z" fill="#f7a02a"/><path d="M26.2 66L37 84.300Q27.1 76 24.7 71z" fill="#f58a32"/><path d="M37.7 66L48.4 84.300Q38.55 76 36.2 71z" fill="#f58a32"/><path d="M49.2 66L59.9 84.300Q50.05 76 47.7 71z" fill="#f58a32"/><path d="M63.5 66L74.2 84.300Q64.35 76 62.0 71z" fill="#f58a32"/><text x="36.5" y="43.5" font-family="'Liberation Serif',serif" font-size="3.6" font-weight="700" fill="#111" text-anchor="middle">причины</text><text x="66" y="42.2" font-family="'Liberation Serif',serif" font-size="3.6" font-weight="700" fill="#111" text-anchor="middle">проблемы</text><text x="35" y="89.5" font-family="'Liberation Serif',serif" font-size="3.6" font-weight="700" fill="#111" text-anchor="middle">факты</text><text x="67" y="88.3" font-family="'Liberation Serif',serif" font-size="3.6" font-weight="700" fill="#111" text-anchor="middle">аргументы</text><text x="8" y="69.5" font-family="'Liberation Serif',serif" font-size="3.6" font-weight="700" fill="#3a2a0a" text-anchor="middle">проблема</text><text x="92" y="66.5" font-family="'Liberation Serif',serif" font-size="3.6" font-weight="700" fill="#3a2a0a" text-anchor="middle">вывод</text></svg></div>
<div style="left:32.5px;top:408.5px;width:101px;height:101px;background:#9b9b9b;border-radius:6px;overflow:hidden;border:1.5px solid #e6be3c;"><svg style="left:-1px;top:-1px;" width="100" height="100" viewBox="0 0 100 100"><defs><linearGradient id="g4" x1="0" x2="1" y1="0" y2="0"><stop offset="0" stop-color="#6488ac"/><stop offset=".5" stop-color="#8ea2b4"/><stop offset="1" stop-color="#6488ac"/></linearGradient></defs><rect width="100" height="100" fill="url(#g4)"/><path d="M22 29.500C35 25 65 25 78 29.500z" fill="#9aa4ae"/><rect x="0" y="29" width="100" height="65.500" fill="#9b9b9b"/><path d="M30 94.500C40 97.500 60 97.500 70 94.500z" fill="#9b9b9b"/><rect x="0" y="94.500" width="100" height="5.500" fill="#5a82ac" opacity=".0"/><text x="50" y="17.4" font-family="'Liberation Serif',serif" font-size="10" font-weight="700" fill="#b00d18" text-anchor="middle" textLength="70.500" lengthAdjust="spacingAndGlyphs">Балық қаңқасы</text><path d="M12.800 44.700L-7 62.300 12.800 80.800z" fill="none" stroke="#4a4a4a" stroke-width=".6"/><ellipse cx="4.600" cy="56.900" rx="1.300" ry="1.100" fill="#0a0a0a"/><path d="M12.800 62.300H91.600" stroke="#0a0a0a" stroke-width="1.300"/><path d="M35.8 43.700L21.5 62.300L36.8 82" fill="none" stroke="#2a2a2a" stroke-width=".6"/><path d="M57.9 43.700L44.4 62.300L59.8 82" fill="none" stroke="#2a2a2a" stroke-width=".6"/><path d="M80.8 43.700L66.5 62.300L82.3 82" fill="none" stroke="#2a2a2a" stroke-width=".6"/><path d="M108 44C98 45 91.600 53 91.600 62.300C91.600 71 98 79 108 80" fill="none" stroke="#3a3a3a" stroke-width=".6"/></svg></div>
<div style="left:34px;top:516px;width:98px;height:98px;background:#fff;border-radius:4px;overflow:hidden;"><svg style="left:0px;top:0px;" width="98" height="98" viewBox="0 0 98 98"><defs><linearGradient id="g5" x1="0" x2="1" y1="0" y2="0"><stop offset="0" stop-color="#7ecfe0"/><stop offset=".5" stop-color="#bfe8f0"/><stop offset="1" stop-color="#5cc0d8"/></linearGradient></defs><rect width="98" height="98" fill="#fdfdfd"/><path d="M0 0h98v8C80 12 62 5 46 3.500 28 3 12 7 0 9.500z" fill="url(#g5)"/><path d="M0 9.500C14 6 30 5.500 46 7.500 62 10 80 11.500 98 8v2C80 13.500 62 12 46 9.500 30 7.500 14 8 0 11z" fill="#d8f0f6"/><text x="49" y="24" font-family="'Liberation Sans',sans-serif" font-size="8.8" font-weight="400" fill="#1a7896" text-anchor="middle" textLength="78.300" lengthAdjust="spacingAndGlyphs">Прием «ФИШБОУН»</text><path d="M4 53.900L11.200 39.800H31.500L24.800 53.900 31.500 68.500H11.200z" fill="#1668c0"/><path d="M24 53.900H81" stroke="#1668c0" stroke-width="2"/><path d="M79.200 54L83.500 48.200H96.900L92.900 54 96.900 60.200H83.500z" fill="#1668c0"/><path d="M46.700 28.400C39 40 38 66 46.700 79.700C43.500 66 43.500 42 46.700 28.400z" fill="#1668c0" stroke="#1668c0" stroke-width="1.200"/><path d="M66 28.400C58.300 40 57.300 66 66 79.700C62.800 66 62.800 42 66 28.400z" fill="#1668c0" stroke="#1668c0" stroke-width="1.200"/><text x="43" y="34" font-family="'Liberation Sans',sans-serif" font-size="3.4" font-weight="400" fill="#222" text-anchor="middle">Причины</text><text x="64.5" y="41" font-family="'Liberation Sans',sans-serif" font-size="3.4" font-weight="400" fill="#222" text-anchor="middle">Причины</text><text x="63" y="67.8" font-family="'Liberation Sans',sans-serif" font-size="3.4" font-weight="400" fill="#222" text-anchor="middle">Факты</text><text x="41.5" y="76" font-family="'Liberation Sans',sans-serif" font-size="3.4" font-weight="400" fill="#222" text-anchor="middle">Факты</text><text x="15" y="55.2" font-family="'Liberation Sans',sans-serif" font-size="3.4" font-weight="400" fill="#0a3a7a" text-anchor="middle">Проблема</text><text x="88.5" y="55.2" font-family="'Liberation Sans',sans-serif" font-size="3.4" font-weight="400" fill="#0a3a7a" text-anchor="middle">Вывод</text><circle cx="13" cy="46.500" r="2" fill="none" stroke="#0e58a8" stroke-width=".5"/></svg></div>
<div style="left:34px;top:622px;width:98px;height:41px;background:#fff;border-radius:4px 4px 0 0;overflow:hidden;"><svg style="left:0px;top:0px;" width="98" height="98" viewBox="0 0 98 98"><defs><radialGradient id="g6" cx=".5" cy=".62" r=".72"><stop offset="0" stop-color="#ffffff"/><stop offset=".6" stop-color="#f6fbff"/><stop offset="1" stop-color="#bfe0f8"/></radialGradient></defs><rect width="98" height="98" fill="url(#g6)"/><text x="10" y="7.8" font-family="'Liberation Sans',sans-serif" font-size="3.6" font-weight="700" fill="#e83030" text-anchor="start">«Фишбоун» әдісі</text><text x="0" y="0" font-family="'Liberation Sans',sans-serif" font-size="2.8" font-weight="700" fill="#f05050" text-anchor="start" transform="translate(30 24) rotate(-38)">Мәселенің</text><text x="0" y="0" font-family="'Liberation Sans',sans-serif" font-size="2.8" font-weight="700" fill="#f05050" text-anchor="start" transform="translate(33 28) rotate(-38)">анықталуы</text><text x="0" y="0" font-family="'Liberation Sans',sans-serif" font-size="2.8" font-weight="700" fill="#f05050" text-anchor="start" transform="translate(44 23) rotate(-35)">Проблеманың негізгі</text><text x="0" y="0" font-family="'Liberation Sans',sans-serif" font-size="2.8" font-weight="700" fill="#f05050" text-anchor="start" transform="translate(47.5 26.5) rotate(-35)">себебі неліктен?</text><text x="0" y="0" font-family="'Liberation Sans',sans-serif" font-size="2.8" font-weight="700" fill="#f05050" text-anchor="start" transform="translate(60 22.5) rotate(-38)">Қосымша себептердің</text><text x="0" y="0" font-family="'Liberation Sans',sans-serif" font-size="2.8" font-weight="700" fill="#f05050" text-anchor="start" transform="translate(63 27) rotate(-38)">айғақтары?</text><text x="0" y="0" font-family="'Liberation Sans',sans-serif" font-size="2.8" font-weight="700" fill="#f05050" text-anchor="start" transform="translate(69 29.5) rotate(-38)">Тұжырымдама</text><text x="0" y="0" font-family="'Liberation Sans',sans-serif" font-size="2.8" font-weight="700" fill="#f05050" text-anchor="start" transform="translate(71.5 32.5) rotate(-38)">неліктен туындады?</text><text x="0" y="0" font-family="'Liberation Sans',sans-serif" font-size="2.8" font-weight="700" fill="#f05050" text-anchor="start" transform="translate(81.5 31.5) rotate(-35)">Проблеманың түйіні</text><text x="0" y="0" font-family="'Liberation Sans',sans-serif" font-size="2.8" font-weight="700" fill="#f05050" text-anchor="start" transform="translate(0 39) rotate(-35)">неліктен</text><path d="M3 42Q15.0 34.5 29 30.5Q23.5 35.5 14 42z" fill="#0a0a0a"/><path d="M21 42Q28.0 33 37 29Q34.0 34 27 42z" fill="#0a0a0a"/><path d="M35 42Q40.5 31 48 27Q46.0 32 40 42z" fill="#0a0a0a"/><path d="M47 42Q53.5 28.5 62 24.5Q60.0 29.5 54 42z" fill="#0a0a0a"/><path d="M59 42Q63.0 34 69 30Q68.5 35 64 42z" fill="#0a0a0a"/><path d="M70 42Q73.0 36.5 78 32.5Q77.5 37.5 73 42z" fill="#0a0a0a"/><path d="M84 42Q90.0 35.5 98 31.5Q100.0 36.5 98 36z" fill="#0a0a0a"/><path d="M88 42Q92 37.500 98 35.500" stroke="#fff" stroke-width=".8" fill="none"/></svg></div>
<!-- s_panel -->
<div style="left:982px;top:122.5px;width:340px;height:541px;background:#ececec;border-radius:0 3px 0 0;"></div>
<div style="left:1305px;top:122.5px;width:17px;height:541px;background:#f1f1f1;border-radius:0 3px 0 0;"></div>
<div style="left:1307px;top:140px;width:13px;height:166px;background:#c1c1c1;"></div>
<svg style="left:1309.8px;top:130px;" width="7.4" height="4.2" viewBox="0 0 7.4 4.2"><path d="M0 4.200l3.700-4.200 3.700 4.200z" fill="#a3a3a3"/></svg>
<svg style="left:1309.8px;top:651.5px;" width="7.4" height="4.2" viewBox="0 0 7.4 4.2"><path d="M0 0l3.700 4.200 3.700-4.200z" fill="#505050"/></svg>
<div style="left:985px;top:126px;width:317px;height:298.5px;background:#ffffff;border-radius:12px;"></div>
<span class="t" style="left:1000.71px;top:140.46px;font:400 18px 'Liberation Sans',sans-serif;line-height:18px;color:#07077f;letter-spacing:-0.025px;">Сабақтың тақырыбы: -</span>
<span class="t" style="left:1000.71px;top:162.76px;font:400 18px 'Liberation Sans',sans-serif;line-height:18px;color:#07077f;letter-spacing:-0.087px;">презентация на Slide-Share.ru...</span>
<div style="left:1288.3px;top:142.9px;width:3.2px;height:3.2px;background:#9a9a9a;border-radius:2px;"></div>
<div style="left:1288.3px;top:148.4px;width:3.2px;height:3.2px;background:#9a9a9a;border-radius:2px;"></div>
<div style="left:1288.3px;top:153.9px;width:3.2px;height:3.2px;background:#9a9a9a;border-radius:2px;"></div>
<svg style="left:1001.5px;top:187px;" width="15" height="12" viewBox="0 0 15 12"><rect x="1" y=".5" width="13" height="8" rx="1" fill="#f2f2f2" stroke="#9a9a9a" stroke-width=".8"/><circle cx="5" cy="4" r="1.600" fill="none" stroke="#8a8a8a" stroke-width=".8"/><circle cx="10" cy="4" r="1.600" fill="none" stroke="#8a8a8a" stroke-width=".8"/><path d="M3 8.500v3h2.500v-3M9.500 8.500v3H12v-3M6 10h3" stroke="#9a9a9a" stroke-width=".8" fill="none"/></svg>
<span class="t" style="left:1020.93px;top:186.15px;font:700 14px 'Liberation Sans',sans-serif;line-height:14px;color:#0a6a0a;letter-spacing:0.051px;">slide-share.ru</span>
<span class="t" style="left:1000.93px;top:206.15px;font:400 14px 'Liberation Sans',sans-serif;line-height:14px;color:#1a1a1a;letter-spacing:0.097px;">Изображение слайда.</span>
<div style="left:985px;top:234px;width:317px;height:1px;background:#e6e6e6;"></div>
<div style="left:1001px;top:251px;width:111px;height:27px;background:#cfdaf2;border-radius:7px;"></div>
<span class="t" style="left:1010.28px;top:259.00px;font:400 13px 'Liberation Sans',sans-serif;line-height:13px;color:#33363d;letter-spacing:0.121px;">Балық қаңқасы</span>
<div style="left:1001px;top:284px;width:172px;height:27px;background:#cfdaf2;border-radius:7px;"></div>
<span class="t" style="left:1010.28px;top:292.00px;font:400 13px 'Liberation Sans',sans-serif;line-height:13px;color:#33363d;letter-spacing:0.194px;">Фишбоун балық қаңқасы</span>
<div style="left:1179px;top:284px;width:36px;height:27px;background:#cfdaf2;border-radius:7px;"></div>
<div style="left:1191.2px;top:297px;width:2.6px;height:2.6px;background:#2a2d33;border-radius:2px;"></div>
<div style="left:1195.7px;top:297px;width:2.6px;height:2.6px;background:#2a2d33;border-radius:2px;"></div>
<div style="left:1200.2px;top:297px;width:2.6px;height:2.6px;background:#2a2d33;border-radius:2px;"></div>
<div style="left:1001px;top:327px;width:285px;height:38px;background:#ffdc3c;border-radius:9px;"></div>
<div style="left:1158.5px;top:327px;width:1px;height:38px;background:#f0cd30;"></div>
<svg style="left:1012px;top:336px;" width="16" height="20" viewBox="0 0 16 20"><path d="M5.500 1h5v6.500h4L8 14.500 1.500 7.500h4z" fill="#0c0c0c"/><rect x="1.500" y="16.500" width="13" height="2.200" fill="#0c0c0c"/></svg>
<span class="t" style="left:1040.58px;top:339.00px;font:400 15px 'Liberation Sans',sans-serif;line-height:15px;color:#141414;letter-spacing:-0.182px;">Открыть</span>
<span class="t" style="left:1193.20px;top:339.43px;font:400 14.5px 'Liberation Sans',sans-serif;line-height:14.5px;color:#141414;letter-spacing:-0.181px;">960×720</span>
<svg style="left:1262.5px;top:339px;" width="9" height="14" viewBox="0 0 9 14"><path d="M4.500 0L9 5.500H0zM4.500 14L9 8.500H0z" fill="#0c0c0c"/></svg>
<div style="left:1001px;top:371px;width:139.7px;height:38px;background:#f0f0f5;border-radius:9px;"></div>
<div style="left:1147px;top:371px;width:139px;height:38px;background:#f0f0f5;border-radius:9px;"></div>
<svg style="left:1010px;top:380px;" width="20" height="20" viewBox="0 0 20 20"><path d="M1.500 6V4a2.500 2.500 0 0 1 2.500-2.500h2M14 1.500h2A2.500 2.500 0 0 1 18.500 4v2M18.500 14v2a2.500 2.500 0 0 1-2.500 2.500h-2M6 18.500H4A2.500 2.500 0 0 1 1.500 16v-2" fill="none" stroke="#0c0c0c" stroke-width="1.800"/><circle cx="10" cy="10" r="3" fill="none" stroke="#0c0c0c" stroke-width="1.800"/></svg>
<span class="t" style="left:1040.58px;top:382.80px;font:400 15px 'Liberation Sans',sans-serif;line-height:15px;color:#141414;letter-spacing:-0.181px;">Похожие</span>
<svg style="left:1156px;top:381px;" width="20" height="18" viewBox="0 0 20 18"><path d="M11.500 0.500L19.500 7.500 11.500 14.500V10.300C6.500 10.300 3 12 0.500 16.500 1.500 10 4.800 5.500 11.500 4.600z" fill="#0c0c0c"/></svg>
<span class="t" style="left:1183.58px;top:382.80px;font:400 15px 'Liberation Sans',sans-serif;line-height:15px;color:#141414;transform:scaleX(0.9632);transform-origin:0 0;">Отправить</span>
<div style="left:985px;top:428.5px;width:317px;height:240px;background:#ffffff;border-radius:12px;"></div>
<span class="t" style="left:1000.23px;top:441.15px;font:700 14px 'Liberation Sans',sans-serif;line-height:14px;color:#7f7f7f;letter-spacing:0.074px;">Связанные картинки</span>
<!-- s_related -->
<div style="left:989.3px;top:462px;width:151.7px;height:114.3px;background:#fff;border-radius:7px;overflow:hidden;border:1px solid #dcdcdc;"><svg style="left:-1px;top:-1px;" width="151.7" height="113.8" viewBox="0 0 151.7 113.8"><defs><linearGradient id="r1g" x1="0" x2="0" y1="0" y2="1"><stop offset="0" stop-color="#9cc4ee"/><stop offset=".4" stop-color="#78aee8"/><stop offset="1" stop-color="#4a8cdc"/></linearGradient></defs><rect width="151.7" height="113.8" fill="#fff"/><rect width="151.7" height="19.300" fill="url(#r1g)"/><circle cx="140" cy="5" r="4" fill="#eaf3fc" opacity=".85"/><circle cx="8" cy="21" r="5" fill="#fff" opacity=".9"/><text x="76" y="8.2" font-family="'Liberation Sans',sans-serif" font-size="5" font-weight="700" font-style="italic" fill="#b01030" text-anchor="middle" textLength="116" lengthAdjust="spacingAndGlyphs">«Фишбоун» (балық қаңқасы) әдісі бойынша</text><text x="76" y="14.2" font-family="'Liberation Sans',sans-serif" font-size="5" font-weight="700" font-style="italic" fill="#b01030" text-anchor="middle" textLength="128" lengthAdjust="spacingAndGlyphs">«Сары ауру» мәтінін талдап, қорытынды жасау.</text><path d="M1.800 67.500C8 60 20 52.500 28.500 52.500 35 53 37.500 60 36.500 68 36 75 32 75.500 26 75 18 74.500 10 73 6 71.500L12 70 3.500 69z" fill="#0a0a0a"/><path d="M20.500 59.500q2.500 2 5.500 0" stroke="#fff" stroke-width=".9" fill="none"/><path d="M39 64.800H117" stroke="#1a1a1a" stroke-width="1.300"/><path d="M121 65.500C126 58.500 137 55 151.700 55.500 145 58 141 62 140.500 66 140 70 141.500 72.500 142.500 73.500 134 73.500 125 71 121 65.500z" fill="#0a0a0a"/><path d="M42.5 62.200L67.3 25.500" stroke="#3a3a3a" stroke-width=".7"/><path d="M57 62.200L81.5 25.500" stroke="#3a3a3a" stroke-width=".7"/><path d="M71 62.200L95.5 25.500" stroke="#3a3a3a" stroke-width=".7"/><path d="M84.5 62.200L108.5 25.500" stroke="#3a3a3a" stroke-width=".7"/><path d="M97.5 62.200L120.2 25.500" stroke="#3a3a3a" stroke-width=".7"/><path d="M42.5 67.700L64.8 105.200" stroke="#3a3a3a" stroke-width=".7"/><path d="M57 67.700L79.5 105.200" stroke="#3a3a3a" stroke-width=".7"/><path d="M71 67.700L92.7 105.200" stroke="#3a3a3a" stroke-width=".7"/><path d="M85.5 67.700L107.3 105.200" stroke="#3a3a3a" stroke-width=".7"/><path d="M100 67.700L121.8 105.200" stroke="#3a3a3a" stroke-width=".7"/><text x="44" y="26" font-family="'Liberation Sans',sans-serif" font-size="2.8" font-weight="700" fill="#c01828" text-anchor="start">Себептері</text><text x="113.5" y="29.2" font-family="'Liberation Sans',sans-serif" font-size="2.8" font-weight="700" fill="#c01828" text-anchor="start">Құрбы</text><text x="3.5" y="51.3" font-family="'Liberation Sans',sans-serif" font-size="2.8" font-weight="700" fill="#c01828" text-anchor="start">Тақырыбы</text><text x="130.5" y="81.2" font-family="'Liberation Sans',sans-serif" font-size="2.8" font-weight="700" fill="#c01828" text-anchor="start">Қорытынды</text><text x="43.5" y="109.5" font-family="'Liberation Sans',sans-serif" font-size="2.8" font-weight="700" fill="#c01828" text-anchor="start">Белгілері</text></svg></div>
<div style="left:1145.2px;top:462px;width:152.7px;height:114.7px;background:#ffc000;border-radius:7px 10px 7px 7px;overflow:hidden;"><svg style="left:0px;top:0px;" width="152.7" height="114.7" viewBox="0 0 152.7 114.7"><rect width="152.7" height="114.7" fill="#ffc000"/><text x="71.9" y="24.2" font-family="'Liberation Serif',serif" font-size="8" font-weight="700" font-style="italic" fill="#1a1200" text-anchor="middle" textLength="96.800" lengthAdjust="spacingAndGlyphs">«Балық қаңқасы» әдісімен</text><text x="73" y="33.7" font-family="'Liberation Serif',serif" font-size="8" font-weight="700" font-style="italic" fill="#1a1200" text-anchor="middle" textLength="57.300" lengthAdjust="spacingAndGlyphs">есептер шығару</text><path d="M21.400 71L39.700 52 40.800 89z" fill="#4a7cbc"/><circle cx="32.500" cy="66" r="1" fill="#f4e8b0"/><path d="M90 71L103.400 56.600V83.600z" fill="#4a7cbc"/><path d="M40 71H90" stroke="#d8b040" stroke-width=".7"/><path d="M58 56L47 71L58 86" fill="none" stroke="#e2b428" stroke-width=".6"/><path d="M66.5 56L55.5 71L66.5 86" fill="none" stroke="#e2b428" stroke-width=".6"/><path d="M75 56L64 71L75 86" fill="none" stroke="#e2b428" stroke-width=".6"/><path d="M83.5 56L72.5 71L83.5 86" fill="none" stroke="#e2b428" stroke-width=".6"/><path d="M92 56L81 71L92 86" fill="none" stroke="#e2b428" stroke-width=".6"/></svg></div>
<div style="left:989.3px;top:581.4px;width:151.5px;height:100px;background:#fff;border-radius:7px 7px 0 0;overflow:hidden;border:1px solid #dcdcdc;"><svg style="left:-1px;top:-1px;" width="151.5" height="100" viewBox="0 0 151.5 100"><rect width="151.5" height="100" fill="#fff"/><rect width="151.5" height="2.200" fill="#fbe6a8"/><text x="79" y="7.2" font-family="'Liberation Sans',sans-serif" font-size="3.2" font-weight="700" fill="#1a2a5a" text-anchor="middle">«ФИШБОУН» әдісі</text><path d="M20.700 26.600L2.100 61.200 12 82M20.700 26.600V82" fill="none" stroke="#0a0a0a" stroke-width="1"/><path d="M20.700 57.600H129.700" stroke="#0a0a0a" stroke-width="1.100"/><path d="M129.700 57.600L148.100 21.200V82M129.700 57.600L141 82" fill="none" stroke="#0a0a0a" stroke-width="1"/><path d="M48.4 10L36.4 57.600L43.9 82" fill="none" stroke="#0a0a0a" stroke-width=".9"/><path d="M73.2 10L61.2 57.600L68.7 82" fill="none" stroke="#0a0a0a" stroke-width=".9"/><path d="M98.2 10L86.2 57.600L93.7 82" fill="none" stroke="#0a0a0a" stroke-width=".9"/><path d="M122.7 10L110.7 57.600L118.2 82" fill="none" stroke="#0a0a0a" stroke-width=".9"/></svg></div>
<div style="left:1145.3px;top:581.5px;width:152.6px;height:100px;background:#fff;border-radius:7px 7px 0 0;overflow:hidden;border:1px solid #dedede;"><svg style="left:-1px;top:-1px;" width="152.6" height="100" viewBox="0 0 152.6 100"><defs><linearGradient id="r4g" x1="0" x2="1" y1="0" y2="0"><stop offset="0" stop-color="#dadada"/><stop offset=".25" stop-color="#ffffff"/><stop offset=".8" stop-color="#ffffff"/><stop offset="1" stop-color="#d4d4d4"/></linearGradient><linearGradient id="r4h" x1="0" x2="0" y1="0" y2="1"><stop offset="0" stop-color="#c8c8c8"/><stop offset="1" stop-color="#ececec"/></linearGradient></defs><rect width="152.6" height="100" fill="url(#r4g)"/><text x="81" y="15.8" font-family="'Liberation Serif',serif" font-size="7.5" font-weight="700" fill="#1a1a1a" text-anchor="middle" textLength="52.500" lengthAdjust="spacingAndGlyphs">балық қаңқасы</text><path d="M5 26.500C40 24 100 24.500 150 24.500V100H5z" fill="#f8f8f8"/><path d="M5 26.500C40 24 100 24.500 150 24.500V33H5z" fill="url(#r4h)"/><rect x="5" y="32.500" width="145" height="2" fill="#c4c4c4"/><path d="M5 34.500h8L4 100h-4z" fill="#d0d0d0" opacity=".7"/><rect x="148" y="24.500" width="4.600" height="76" fill="#c8c8c8"/><text x="49.5" y="45" font-family="'Liberation Sans',sans-serif" font-size="3.2" font-weight="400" fill="#222" text-anchor="start">Сұрақтар</text><text x="119" y="57.2" font-family="'Liberation Sans',sans-serif" font-size="3.2" font-weight="400" fill="#222" text-anchor="start">Қорытынды</text><text x="20" y="62" font-family="'Liberation Sans',sans-serif" font-size="3.2" font-weight="400" fill="#222" text-anchor="start">Мәселе</text><path d="M43 50l18 6 0 3z" fill="#dcdcdc"/><path d="M62 70l22 10 2-4z" fill="#e0e0e0"/><path d="M13.500 77C15 68 24 62.500 32 64.500 37 66 39.500 71 39 78L38 81H16z" fill="#8ea8c4" stroke="#2a3448" stroke-width=".7"/><ellipse cx="25" cy="73.500" rx="1.700" ry="1.100" fill="#101828"/><path d="M38 69.500C60 66 90 64 125 66.500" fill="none" stroke="#26344c" stroke-width="2"/><path d="M55 52Q43 66.0 54 84Q47 67.0 55 52z" fill="#26344c" stroke="#26344c" stroke-width="1.5"/><path d="M68 53Q56 66.5 67 84Q60 67.5 68 53z" fill="#26344c" stroke="#26344c" stroke-width="1.5"/><path d="M81 55Q69 66.5 80 82Q73 67.5 81 55z" fill="#26344c" stroke="#26344c" stroke-width="1.35"/><path d="M94 57Q82 66.0 93 79Q86 67.0 94 57z" fill="#26344c" stroke="#26344c" stroke-width="1.2"/><path d="M105 59.5Q93 65.75 104 76Q97 66.75 105 59.5z" fill="#26344c" stroke="#26344c" stroke-width="1.0"/><path d="M115 62Q103 65.25 114 72.5Q107 66.25 115 62z" fill="#26344c" stroke="#26344c" stroke-width="0.8"/><path d="M123 63.5Q111 64.75 122 70Q115 65.75 123 63.5z" fill="#26344c" stroke="#26344c" stroke-width="0.6"/><path d="M125.500 66.500L145.300 57.500 138 67 145 76.500z" fill="#8ea8c4" stroke="#4a5a74" stroke-width=".6"/></svg></div>
<!-- s_ad -->
<div style="left:148px;top:607px;width:819px;height:60px;background:#393939;border-radius:12px;"></div>
<div style="left:156px;top:614.7px;width:40.5px;height:40.5px;background:#888;border-radius:8.5px;overflow:hidden;"><svg style="left:0px;top:0px;" width="40.5" height="40.5" viewBox="0 0 40.5 40.5"><defs><linearGradient id="adsky" x1="0" x2="0" y1="0" y2="1"><stop offset="0" stop-color="#3f86d8"/><stop offset=".5" stop-color="#7fb2e6"/><stop offset="1" stop-color="#d8e2ec"/></linearGradient></defs><rect width="40.500" height="40.500" fill="url(#adsky)"/><ellipse cx="7" cy="4" rx="6" ry="2.500" fill="#fff" opacity=".85"/><ellipse cx="29" cy="3" rx="6" ry="2.200" fill="#fff" opacity=".85"/><ellipse cx="4" cy="12" rx="4" ry="2" fill="#fff" opacity=".8"/><path d="M32 8l8.500-6v28H31z" fill="#eef0f2"/><rect x="30" y="18" width="10.500" height="14" fill="#b8bcc2"/><rect x="0" y="18" width="40.500" height="22.500" fill="#30343a"/><path d="M0 18h8v14H0z" fill="#c8ccd0"/><path d="M8 34L14 2h5.500L13.500 34z" fill="#f4f4f0"/><path d="M20 2h5l8 30h-6.500z" fill="#eeeee8"/><path d="M15 0h9l-1.500 8h-6z" fill="#e8e8e2"/><path d="M15.500 8h6.500l2 16h-10z" fill="#4a6a6a"/><rect x="13" y="22" width="12" height="10" fill="#1e2228"/><rect x="23.500" y="28" width="15" height="9.500" rx="2" fill="#2a8ad0"/><path d="M27 35l3.500-5 3.500 5" stroke="#e8c860" stroke-width=".9" fill="none"/><rect x="0" y="37.500" width="40.500" height="3" fill="#9a6a3a"/></svg></div>
<span class="t" style="left:203.59px;top:619.00px;font:700 13px 'Liberation Sans',sans-serif;line-height:13px;color:#ffffff;letter-spacing:0.022px;">Гидравлические вибротрамбовки!</span>
<span class="t" style="left:430.50px;top:619.00px;font:700 13px 'Liberation Sans',sans-serif;line-height:13px;color:#ffffff;">·</span>
<span class="t" style="left:439.29px;top:619.00px;font:400 13px 'Liberation Sans',sans-serif;line-height:13px;color:#ffffff;letter-spacing:0.073px;">reschke.ru</span>
<div style="left:510.4px;top:618px;width:57px;height:17px;background:#474747;border-radius:6px;"></div>
<span class="t" style="left:517.10px;top:621.19px;font:400 11px 'Liberation Sans',sans-serif;line-height:11px;color:#d8d8d8;letter-spacing:0.055px;">Реклама</span>
<span class="t" style="left:203.59px;top:638.00px;font:400 13px 'Liberation Sans',sans-serif;line-height:13px;color:#ffffff;letter-spacing:0.014px;">Вибротрамбовки для уплотнения грунта. Доступные цены. Быстрая доставка по РФ. Зайди!</span>
<div style="left:824px;top:614.7px;width:91px;height:40.3px;background:#ffdc3c;border-radius:11px;"></div>
<span class="t" style="left:839.17px;top:627.30px;font:400 15px 'Liberation Sans',sans-serif;line-height:15px;color:#2a2a2a;letter-spacing:0.087px;">Перейти</span>
<div style="left:919px;top:614.7px;width:39px;height:40.3px;background:#474747;border-radius:11px;"></div>
<div style="left:937.2px;top:628.8px;width:2.6px;height:2.6px;background:#8a8a8a;border-radius:2px;"></div>
<div style="left:937.2px;top:633.8px;width:2.6px;height:2.6px;background:#8a8a8a;border-radius:2px;"></div>
<div style="left:937.2px;top:638.8px;width:2.6px;height:2.6px;background:#8a8a8a;border-radius:2px;"></div>
<!-- s_dl -->
<div style="left:8px;top:663px;width:1353px;height:57px;background:#ffdee4;"></div>
<div style="left:8px;top:663px;width:1353px;height:1px;background:#f4ccd4;"></div>
<svg style="left:28.7px;top:683.8px;" width="14.4" height="14.4" viewBox="0 0 16 16"><circle cx="8" cy="8" r="7.600" fill="#fff"/><path d="M8 .4a7.600 7.600 0 0 1 6.600 3.800H8a3.800 3.800 0 0 0-3.600 2.600L1.700 3.600A7.600 7.600 0 0 1 8 .4z" fill="#ea4335"/><path d="M14.600 4.200a7.600 7.600 0 0 1-6.900 11.400l3.600-5.700a3.800 3.800 0 0 0 0-5.700z" fill="#fbbc05"/><path d="M7.700 15.600A7.600 7.600 0 0 1 1.700 3.600l3 5.200a3.800 3.800 0 0 0 4.400 2.900z" fill="#34a853"/><circle cx="8" cy="8" r="3.400" fill="#fff"/><circle cx="8" cy="8" r="2.700" fill="#4285f4"/></svg>
<span class="t" style="left:56.78px;top:686.30px;font:400 13px 'Liberation Sans',sans-serif;line-height:13px;color:#2a2830;letter-spacing:-0.086px;">03528a06-84f8-....webp</span>
<svg style="left:215.5px;top:688.9px;" width="11" height="7" viewBox="0 0 11 7"><path d="M1 6l4.500-4.500L10 6" stroke="#2a2426" stroke-width="1.700" fill="none"/></svg>
<div style="left:244px;top:670px;width:1px;height:44px;background:#a08e94;"></div>
<svg style="left:261.1px;top:683.8px;" width="14.4" height="14.4" viewBox="0 0 16 16"><circle cx="8" cy="8" r="7.600" fill="#fff"/><path d="M8 .4a7.600 7.600 0 0 1 6.600 3.800H8a3.800 3.800 0 0 0-3.600 2.600L1.700 3.600A7.600 7.600 0 0 1 8 .4z" fill="#ea4335"/><path d="M14.600 4.200a7.600 7.600 0 0 1-6.900 11.400l3.600-5.700a3.800 3.800 0 0 0 0-5.700z" fill="#fbbc05"/><path d="M7.700 15.600A7.600 7.600 0 0 1 1.700 3.600l3 5.200a3.800 3.800 0 0 0 4.400 2.900z" fill="#34a853"/><circle cx="8" cy="8" r="3.400" fill="#fff"/><circle cx="8" cy="8" r="2.700" fill="#4285f4"/></svg>
<span class="t" style="left:289.59px;top:686.30px;font:400 13px 'Liberation Sans',sans-serif;line-height:13px;color:#2a2830;letter-spacing:-0.073px;">03528a06-84f8-....webp</span>
<svg style="left:448.5px;top:688.9px;" width="11" height="7" viewBox="0 0 11 7"><path d="M1 6l4.500-4.500L10 6" stroke="#2a2426" stroke-width="1.700" fill="none"/></svg>
<div style="left:477.5px;top:670px;width:1px;height:44px;background:#a08e94;"></div>
<svg style="left:494.3px;top:682.5px;" width="16" height="16" viewBox="0 0 16 16"><defs><linearGradient id="dlg1" x1="0" y1="0" x2="1" y2="1"><stop offset="0" stop-color="#eeb0a6"/><stop offset=".5" stop-color="#d8665a"/><stop offset="1" stop-color="#a8342c"/></linearGradient></defs><rect width="16" height="16" fill="url(#dlg1)"/><rect x="1.200" y="1.200" width="13.600" height="13.600" fill="none" stroke="#f6d2cc" stroke-width="1"/><rect x="3" y="3" width="10" height="10" fill="#fdf4f2"/><path d="M3.500 12.500l2.800-3.800 2 2 1.800-2.200 2.400 4z" fill="#d24a40"/><circle cx="6.200" cy="6" r="1.300" fill="#d24a40"/><path d="M9 7.500l3.200-3.200" stroke="#c83a32" stroke-width="1.200"/><circle cx="12" cy="4.200" r="1" fill="#e0342c"/></svg>
<span class="t" style="left:522.49px;top:686.30px;font:400 13px 'Liberation Sans',sans-serif;line-height:13px;color:#2a2830;letter-spacing:0.053px;">feed.photo_.jpg</span>
<svg style="left:681.7px;top:688.9px;" width="11" height="7" viewBox="0 0 11 7"><path d="M1 6l4.500-4.500L10 6" stroke="#2a2426" stroke-width="1.700" fill="none"/></svg>
<div style="left:710.5px;top:670px;width:1px;height:44px;background:#a08e94;"></div>
<svg style="left:727px;top:682.5px;" width="16" height="16" viewBox="0 0 16 16"><defs><linearGradient id="dlg2" x1="0" y1="0" x2="1" y2="1"><stop offset="0" stop-color="#eeb0a6"/><stop offset=".5" stop-color="#d8665a"/><stop offset="1" stop-color="#a8342c"/></linearGradient></defs><rect width="16" height="16" fill="url(#dlg2)"/><rect x="1.200" y="1.200" width="13.600" height="13.600" fill="none" stroke="#f6d2cc" stroke-width="1"/><rect x="3" y="3" width="10" height="10" fill="#fdf4f2"/><path d="M3.500 12.500l2.800-3.800 2 2 1.800-2.200 2.400 4z" fill="#d24a40"/><circle cx="6.200" cy="6" r="1.300" fill="#d24a40"/><path d="M9 7.500l3.200-3.200" stroke="#c83a32" stroke-width="1.200"/><circle cx="12" cy="4.200" r="1" fill="#e0342c"/></svg>
<span class="t" style="left:755.28px;top:686.30px;font:400 13px 'Liberation Sans',sans-serif;line-height:13px;color:#2a2830;transform:scaleX(0.9371);transform-origin:0 0;">6CC728E9-1FCB-4....jpg</span>
<svg style="left:914.5px;top:688.9px;" width="11" height="7" viewBox="0 0 11 7"><path d="M1 6l4.500-4.500L10 6" stroke="#2a2426" stroke-width="1.700" fill="none"/></svg>
<div style="left:943px;top:670px;width:1px;height:44px;background:#a08e94;"></div>
<svg style="left:959.6px;top:682.5px;" width="16" height="16" viewBox="0 0 16 16"><defs><linearGradient id="dlg0" x1="0" y1="0" x2="1" y2="1"><stop offset="0" stop-color="#eeb0a6"/><stop offset=".5" stop-color="#d8665a"/><stop offset="1" stop-color="#a8342c"/></linearGradient></defs><rect width="16" height="16" fill="url(#dlg0)"/><rect x="1.200" y="1.200" width="13.600" height="13.600" fill="none" stroke="#f6d2cc" stroke-width="1"/><rect x="3" y="3" width="10" height="10" fill="#fdf4f2"/><path d="M3.500 12.500l2.800-3.800 2 2 1.800-2.200 2.400 4z" fill="#d24a40"/><circle cx="6.200" cy="6" r="1.300" fill="#d24a40"/><path d="M9 7.500l3.200-3.200" stroke="#c83a32" stroke-width="1.200"/><circle cx="12" cy="4.200" r="1" fill="#e0342c"/></svg>
<span class="t" style="left:988.99px;top:686.30px;font:400 13px 'Liberation Sans',sans-serif;line-height:13px;color:#2a2830;letter-spacing:-0.120px;">1430658248.png</span>
<svg style="left:1147.3px;top:688.9px;" width="11" height="7" viewBox="0 0 11 7"><path d="M1 6l4.500-4.500L10 6" stroke="#2a2426" stroke-width="1.700" fill="none"/></svg>
<div style="left:1176px;top:670px;width:1px;height:44px;background:#a08e94;"></div>
<div style="left:1219px;top:675.7px;width:106px;height:30.3px;border-radius:5px;border:1px solid #eac4cc;"></div>
<span class="t" style="left:1234.74px;top:686.64px;font:400 12px 'Liberation Sans',sans-serif;line-height:12px;color:#1b58c8;letter-spacing:0.088px;">Показать все</span>
<svg style="left:1336.6px;top:685px;" width="12" height="12" viewBox="0 0 12 12"><path d="M1 1l10 10M11 1l-10 10" stroke="#1f1b1d" stroke-width="1.800" fill="none"/></svg>
<span class="t" style="left:1007.46px;top:633.42px;font:400 19px 'Liberation Sans',sans-serif;line-height:19px;color:#8c8c8c;letter-spacing:0.352px;opacity:0.52;">Активация Windows</span>
<span class="t" style="left:1008.20px;top:658.63px;font:400 14.5px 'Liberation Sans',sans-serif;line-height:14.5px;color:#8c8c8c;letter-spacing:0.244px;opacity:0.52;">Чтобы активировать Windows, перейдите в</span>
<span class="t" style="left:1007.70px;top:678.63px;font:400 14.5px 'Liberation Sans',sans-serif;line-height:14.5px;color:#8c8c8c;letter-spacing:0.139px;opacity:0.52;">раздел &quot;Параметры&quot;.</span>
<!-- s_taskbar -->
<div style="left:0px;top:728px;width:1366px;height:40px;background:#05060b;"></div>
<svg style="left:16px;top:739.8px;" width="16.5" height="16.2" viewBox="0 0 16.5 16.2"><path d="M0 2.300L6.700 1.400V7.700H0zM7.500 1.300L16.500 0V7.700H7.500zM0 8.500H6.700V14.800L0 13.900zM7.500 8.500H16.500V16.200L7.500 14.900z" fill="#fff"/></svg>
<svg style="left:63px;top:739px;" width="18" height="18" viewBox="0 0 18 18"><circle cx="11.200" cy="6.700" r="5.300" fill="none" stroke="#fff" stroke-width="1.400"/><path d="M7.400 10.500L1 16.800" stroke="#fff" stroke-width="1.500"/></svg>
<svg style="left:109.5px;top:741px;" width="21" height="14" viewBox="0 0 21 14"><rect x="4.700" y=".7" width="11.600" height="12.600" fill="none" stroke="#fff" stroke-width="1.400"/><path d="M2.800 2.300H.7v9.400h2.100M18.200 2.300h2.100v9.400h-2.100" fill="none" stroke="#fff" stroke-width="1.300"/></svg>
<div style="left:147px;top:728px;width:48px;height:40px;background:#34353b;"></div>
<div style="left:147px;top:765.8px;width:48px;height:2.2px;background:#b9b5f2;"></div>
<svg style="left:159.5px;top:736.7px;" width="22.6" height="22.6" viewBox="0 0 16 16"><circle cx="8" cy="8" r="7.600" fill="#fff"/><path d="M8 .4a7.600 7.600 0 0 1 6.600 3.800H8a3.800 3.800 0 0 0-3.600 2.600L1.700 3.600A7.600 7.600 0 0 1 8 .4z" fill="#ea4335"/><path d="M14.600 4.200a7.600 7.600 0 0 1-6.900 11.400l3.600-5.700a3.800 3.800 0 0 0 0-5.700z" fill="#fbbc05"/><path d="M7.700 15.600A7.600 7.600 0 0 1 1.700 3.600l3 5.200a3.800 3.800 0 0 0 4.400 2.900z" fill="#34a853"/><circle cx="8" cy="8" r="3.400" fill="#fff"/><circle cx="8" cy="8" r="2.700" fill="#4285f4"/></svg>
<div style="left:168.6px;top:746.4px;width:16px;height:16px;background:#d4cfc6;border-radius:8px;overflow:hidden;border:.5px solid #f0ece4;"><div style="left:0px;top:0px;width:16px;height:16px;background:linear-gradient(180deg,#dcd7ce 0%,#d2ccc2 55%,#50546a 85%,#3a3e50 100%);"></div><div style="left:5.5px;top:3px;width:4.5px;height:4.5px;background:#6b5a50;border-radius:3px;"></div><div style="left:4px;top:7px;width:7.5px;height:6px;background:#8c8e98;border-radius:4px 4px 0 0;"></div></div>
<svg style="left:209px;top:738.5px;" width="22" height="18" viewBox="0 0 22 18"><path d="M0 2.500A1.500 1.500 0 0 1 1.500 1H7l2 2h11.500A1.500 1.500 0 0 1 22 4.500V17H0z" fill="#f6c84a"/><rect x="0" y="4.500" width="22" height="12.500" rx=".8" fill="#fbdc7a"/><rect x="1" y="1.800" width="5.500" height="1.200" fill="#5ab0e8"/><path d="M5.500 17.800V11h11v6.800h-3.600v-3.400H9.100v3.400z" fill="#2a9ae8"/></svg>
<div style="left:200px;top:765.8px;width:31px;height:2.2px;background:#b9b5f2;"></div>
<div style="left:231.5px;top:765.8px;width:8.5px;height:2.2px;background:#8a88b0;"></div>
<div style="left:298px;top:765.8px;width:30.69999999999999px;height:2.2px;background:#b9b5f2;"></div>
<div style="left:329.2px;top:765.8px;width:8.5px;height:2.2px;background:#8a88b0;"></div>
<div style="left:396px;top:765.8px;width:31px;height:2.2px;background:#b9b5f2;"></div>
<div style="left:427.5px;top:765.8px;width:8.5px;height:2.2px;background:#8a88b0;"></div>
<svg style="left:257px;top:736px;" width="22" height="22" viewBox="0 0 22 22"><defs><linearGradient id="xg" x1="0" y1="0" x2="1" y2="1"><stop offset="0" stop-color="#d6efd0"/><stop offset=".5" stop-color="#7cc47a"/><stop offset="1" stop-color="#2f8f3e"/></linearGradient></defs><path d="M1 4.500A3.500 3.500 0 0 1 4.500 1H21v20.500H1z" fill="url(#xg)" stroke="#2a8038" stroke-width="1.200"/><path d="M4.500 3.500h3.800l7.200 13h-3.800z" fill="#1f6a30"/><path d="M11.500 3.500h3.600L7.800 16.500H4.200z" fill="#8ccc4a"/><path d="M1.500 17.500l12-2 7.500 1.500v4.500H1.500z" fill="#f2f8f0"/><path d="M12 11.500l10-2.500 1 7.500-10 2.500z" fill="#f6faf4" stroke="#a8cca8" stroke-width=".5"/><path d="M13.500 13.300l8-2M13.800 15.300l8-2M14.100 17.200l8-2" stroke="#9cc49c" stroke-width=".6"/></svg>
<svg style="left:306px;top:736px;" width="22" height="22" viewBox="0 0 22 22"><defs><linearGradient id="pg2" x1="0" y1="0" x2="1" y2="1"><stop offset="0" stop-color="#fbe2d2"/><stop offset=".5" stop-color="#f2a070"/><stop offset="1" stop-color="#d8501c"/></linearGradient></defs><path d="M1 4.500A3.500 3.500 0 0 1 4.500 1H21v20.500H1z" fill="url(#pg2)" stroke="#c84418" stroke-width="1.200"/><path d="M5 3.500h5.200c3 0 4.600 1.600 4.600 3.900s-1.700 4.100-4.700 4.100H8.200v5H5zM8.200 6v3h1.700c1.100 0 1.800-.5 1.800-1.500S11 6 9.900 6z" fill="#c43c14"/><path d="M1.500 18l10-2 9.500 1.200v4.300H1.500z" fill="#fdf4ee"/><path d="M10.500 12l11.500-2.800 1 8-11.500 2.600z" fill="#fdf6f2" stroke="#e4b49c" stroke-width=".5"/><circle cx="17" cy="13.800" r="3" fill="#e8663a"/><path d="M17 13.800l2.600-1.500a3 3 0 0 0-2.600-1.500z" fill="#fbd8c8"/></svg>
<svg style="left:355.5px;top:736.5px;" width="22.5" height="22.5" viewBox="0 0 22.5 22.5"><path d="M11.600 0.400A10.800 10.800 0 1 1 6 20.400L0.300 22.200 2.200 16.700A10.800 10.800 0 0 1 11.600 0.400z" fill="#fff"/><path d="M11.600 2.100a9.100 9.100 0 1 1-4.900 16.800l-3.600 1.100 1.200-3.500A9.100 9.100 0 0 1 11.600 2.100z" fill="#2cb742"/><path d="M8.200 6.300c.4-.1.800 0 1 .4l.8 1.800c.1.300.1.600-.2.900l-.6.700c.8 1.500 1.900 2.600 3.500 3.400l.8-.8c.3-.2.600-.3.900-.1l1.700.9c.4.200.5.600.4 1-.4 1.200-1.500 1.800-2.700 1.600-3.900-.8-6.800-3.800-7.400-7.600-.1-1 .6-2 1.800-2.200z" fill="#fff"/></svg>
<svg style="left:404px;top:736px;" width="22" height="22" viewBox="0 0 22 22"><defs><linearGradient id="wg" x1="0" y1="0" x2="1" y2="1"><stop offset="0" stop-color="#e4eefc"/><stop offset=".5" stop-color="#8cb4ee"/><stop offset="1" stop-color="#2a64c8"/></linearGradient></defs><path d="M1 4.500A3.500 3.500 0 0 1 4.500 1H21v20.500H1z" fill="url(#wg)" stroke="#2458b8" stroke-width="1.200"/><path d="M3 4h3.200l1.600 8.200L9.900 4h2.700l2.100 8.200L16.300 4h3.200l-3.200 12.500h-3l-2.100-7.900-2.100 7.900h-3z" fill="#1440a0"/><path d="M1.500 18l10-1.800 9.500 1v4.300H1.500z" fill="#f2f6fd"/><path d="M12.500 13l9.500-2.400 1 7-9.500 2.400z" fill="#f6f9fe" stroke="#a4bce4" stroke-width=".5"/><path d="M14 14.800l7.500-1.900M14.300 16.800l7.500-1.900" stroke="#9cb4e0" stroke-width=".6"/></svg>
<svg style="left:1169px;top:744.4px;" width="12.5" height="7" viewBox="0 0 12.5 7"><path d="M.5 6.500L6.200.8 12 6.500" stroke="#fff" stroke-width="1.300" fill="none"/></svg>
<svg style="left:1190px;top:742px;" width="18" height="12" viewBox="0 0 18 12"><rect x="6" y="2.300" width="10.300" height="7.700" fill="none" stroke="#fff" stroke-width="1.200"/><rect x="16.600" y="4.500" width="1.200" height="3.400" fill="#fff"/><rect x="7.600" y="4" width="7" height="4.400" fill="#fff"/><path d="M1.300.5v2.200M4.300.5v2.200M.3 2.800h5v1.800a2.500 2.500 0 0 1-5 0zM2.800 7v2.500h3" stroke="#fff" stroke-width="1" fill="none"/></svg>
<span class="t" style="left:1217.64px;top:741.94px;font:400 12px 'Liberation Sans',sans-serif;line-height:12px;color:#ffffff;letter-spacing:0.070px;">ҚАЗ</span>
<span class="t" style="left:1266.04px;top:732.74px;font:400 12px 'Liberation Sans',sans-serif;line-height:12px;color:#ffffff;transform:scaleX(0.9130);transform-origin:0 0;">13:59</span>
<span class="t" style="left:1252.54px;top:750.44px;font:400 12px 'Liberation Sans',sans-serif;line-height:12px;color:#ffffff;transform:scaleX(0.9127);transform-origin:0 0;">29.06.2022</span>
<svg style="left:1324.8px;top:739.8px;" width="17" height="18" viewBox="0 0 17 18"><path d="M0 0h16.200v11.500H6.800v4.300L3.400 11.500H0z" fill="#fff"/><path d="M3 3h10.200M3 5.600h10.200M3 8.200h10.200" stroke="#05060b" stroke-width="1.100"/></svg>
<div style="left:1332.8px;top:747.5px;width:15.5px;height:15.5px;background:#2b2b2e;border-radius:8px;border:1.200px solid #5a5a5e;"></div>
<span class="t" style="left:1337.50px;top:749.89px;font:700 11px 'Liberation Sans',sans-serif;line-height:11px;color:#ffffff;">2</span>
<div style="left:1361.5px;top:728px;width:1px;height:40px;background:#4a4a4e;"></div>
</body></html>
